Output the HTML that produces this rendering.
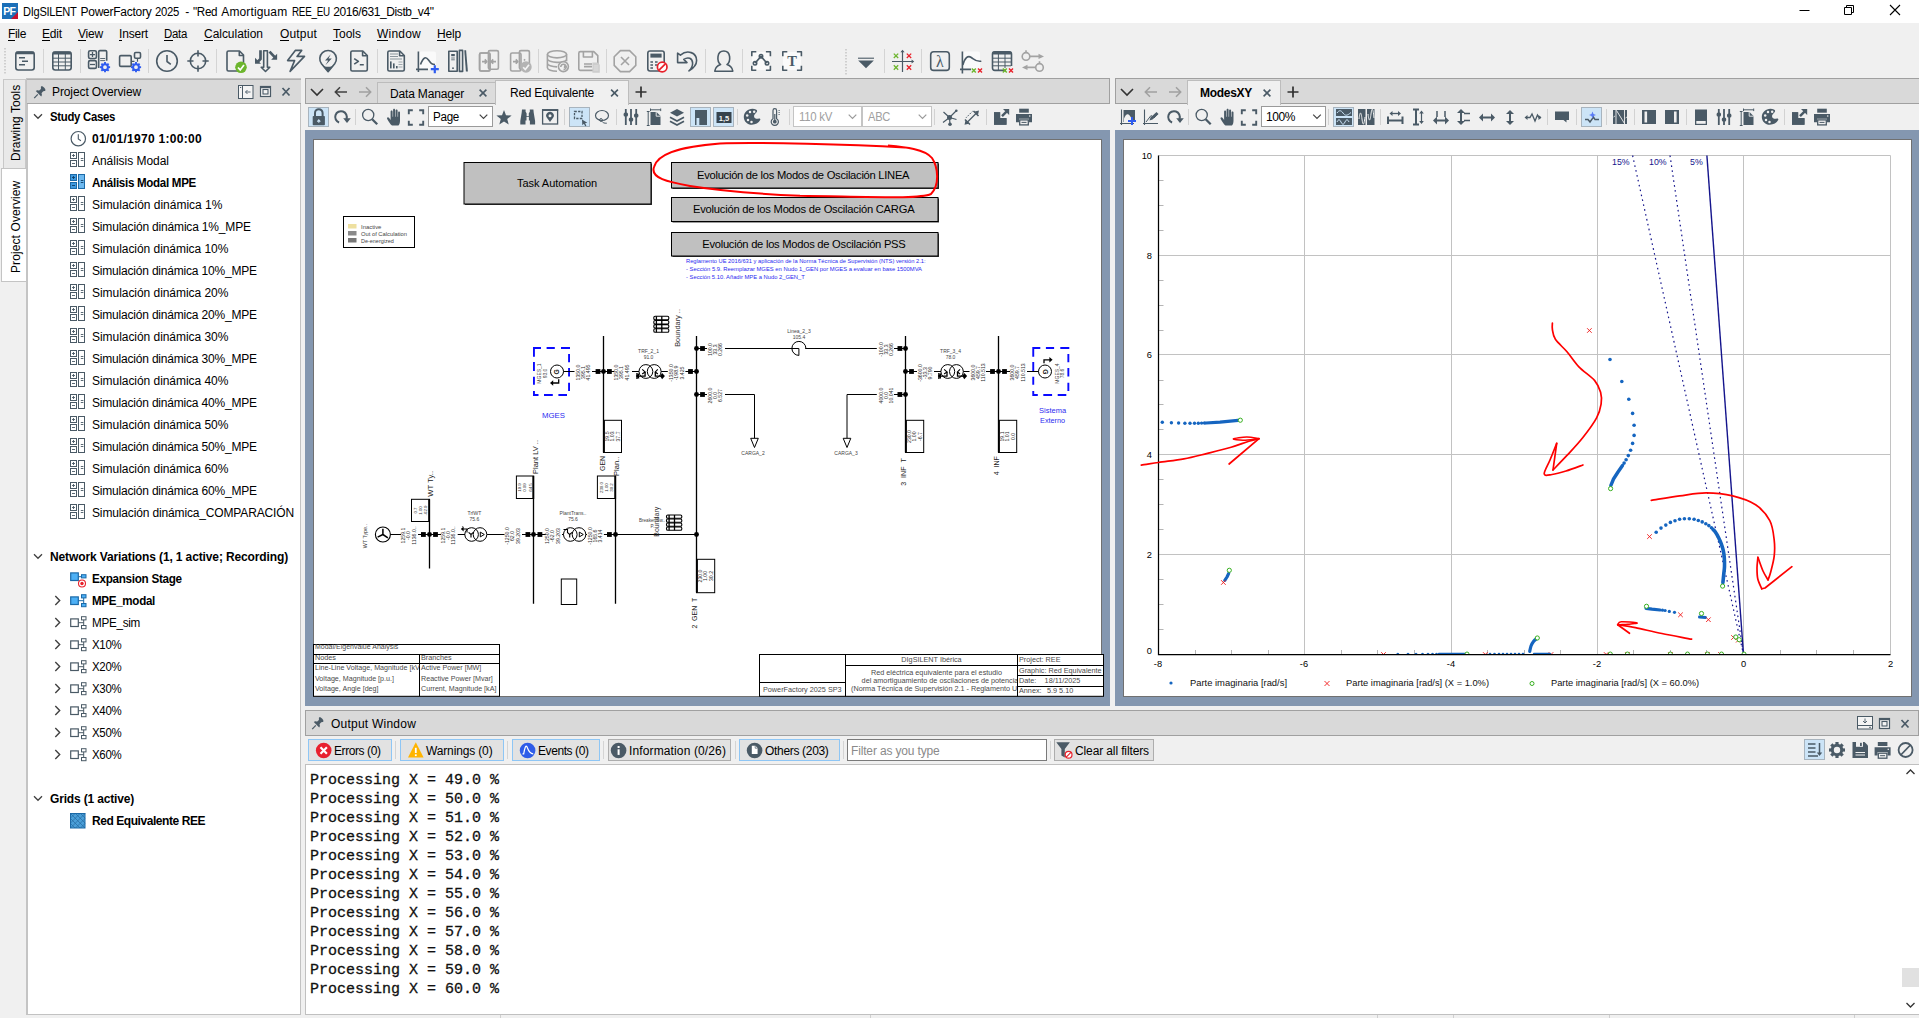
<!DOCTYPE html>
<html><head><meta charset="utf-8"><title>PowerFactory</title>
<style>

html,body{margin:0;padding:0;background:#f0f0f0;overflow:hidden;}
body{width:1919px;height:1018px;font-family:"Liberation Sans",sans-serif;font-size:12px;color:#000;}
#root{position:relative;width:1919px;height:1018px;overflow:hidden;background:#f0f0f0;}
.a{position:absolute;}
.t{position:absolute;white-space:nowrap;line-height:1;}
.b{font-weight:bold;}
svg{position:absolute;overflow:visible;}
.hdr{position:absolute;background:#d9d9d9;border:1px solid #a0a0a0;box-sizing:border-box;}
.canvas{position:absolute;background:#8497b0;}
.page{position:absolute;background:#fff;border:1px solid #555;box-sizing:border-box;}
.sep{position:absolute;width:1px;background:#c8c8c8;}
.hl{position:absolute;background:#cce4f7;border:1px solid #a8b4be;box-sizing:border-box;}
.combo{position:absolute;background:#fff;border:1px solid #9a9a9a;box-sizing:border-box;}
.mono{font-family:"Liberation Mono",monospace;}

</style></head>
<body>
<div id="root">
<div class="a" style="left:0px;top:0px;width:1919px;height:23px;background:#fff;"></div>
<svg style="left:2px;top:3px;" width="16" height="16"><rect x="0" y="0" width="16" height="16" fill="#1b6fb8"/><polygon points="16,9 16,16 9,16" fill="#c8102e"/><text x="1.2" y="11.6" font-family="Liberation Sans" font-weight="bold" font-size="10.5" fill="#fff" letter-spacing="-0.6">PF</text></svg>
<div class="t" style="left:23px;top:6px;font-size:12px;letter-spacing:-0.300px;transform:scaleX(0.9229);transform-origin:0 0;">DIgSILENT</div>
<div class="t" style="left:80.5px;top:6px;font-size:12px;letter-spacing:-0.251px;">PowerFactory</div>
<div class="t" style="left:155px;top:6px;font-size:12px;letter-spacing:-0.300px;transform:scaleX(0.9416);transform-origin:0 0;">2025</div>
<div class="t" style="left:185.3px;top:6px;font-size:12px;letter-spacing:0.000px;">-</div>
<div class="t" style="left:193px;top:6px;font-size:12px;letter-spacing:-0.300px;transform:scaleX(0.9689);transform-origin:0 0;">"Red</div>
<div class="t" style="left:221.3px;top:6px;font-size:12px;letter-spacing:0.131px;">Amortiguam</div>
<div class="t" style="left:292px;top:6px;font-size:12px;letter-spacing:-0.300px;transform:scaleX(0.8179);transform-origin:0 0;">REE_EU</div>
<div class="t" style="left:333.3px;top:6px;font-size:12px;letter-spacing:-0.414px;">2016/631_Distb_v4"</div>
<svg style="left:0px;top:0px;" width="1919" height="23"><path d="M1799.5 10.5h10" stroke="#000" stroke-width="1" fill="none"/><path d="M1844.5 7.5h7v7h-7z M1846.5 7.5v-2h7v7h-2" stroke="#000" stroke-width="1" fill="none"/><path d="M1890 5l10 10M1900 5l-10 10" stroke="#000" stroke-width="1.1" fill="none"/></svg>
<div class="t" style="left:8px;top:28px;font-size:12px;letter-spacing:-0.336px;">File</div>
<div class="a" style="left:8px;top:40px;width:7px;height:1px;background:#000;"></div>
<div class="t" style="left:42px;top:28px;font-size:12px;letter-spacing:-0.168px;">Edit</div>
<div class="a" style="left:42px;top:40px;width:8px;height:1px;background:#000;"></div>
<div class="t" style="left:78px;top:28px;font-size:12px;letter-spacing:-0.199px;">View</div>
<div class="a" style="left:78px;top:40px;width:8px;height:1px;background:#000;"></div>
<div class="t" style="left:119px;top:28px;font-size:12px;letter-spacing:-0.167px;">Insert</div>
<div class="a" style="left:119px;top:40px;width:3px;height:1px;background:#000;"></div>
<div class="t" style="left:164px;top:28px;font-size:12px;letter-spacing:-0.300px;transform:scaleX(0.9526);transform-origin:0 0;">Data</div>
<div class="a" style="left:164px;top:40px;width:9px;height:1px;background:#000;"></div>
<div class="t" style="left:204px;top:28px;font-size:12px;letter-spacing:-0.034px;">Calculation</div>
<div class="a" style="left:204px;top:40px;width:9px;height:1px;background:#000;"></div>
<div class="t" style="left:280px;top:28px;font-size:12px;letter-spacing:0.167px;">Output</div>
<div class="a" style="left:280px;top:40px;width:9px;height:1px;background:#000;"></div>
<div class="t" style="left:333px;top:28px;font-size:12px;letter-spacing:-0.003px;">Tools</div>
<div class="a" style="left:333px;top:40px;width:7px;height:1px;background:#000;"></div>
<div class="t" style="left:377px;top:28px;font-size:12px;letter-spacing:0.219px;">Window</div>
<div class="a" style="left:377px;top:40px;width:11px;height:1px;background:#000;"></div>
<div class="t" style="left:437px;top:28px;font-size:12px;letter-spacing:-0.172px;">Help</div>
<div class="a" style="left:437px;top:40px;width:9px;height:1px;background:#000;"></div>
<svg style="left:0px;top:46px;" width="1919" height="32" viewBox="0 46 1919 32"><rect x="4" y="48" width="2" height="1.5" fill="#cfcfcf"/><rect x="4" y="51" width="2" height="1.5" fill="#cfcfcf"/><rect x="4" y="54" width="2" height="1.5" fill="#cfcfcf"/><rect x="4" y="57" width="2" height="1.5" fill="#cfcfcf"/><rect x="4" y="60" width="2" height="1.5" fill="#cfcfcf"/><rect x="4" y="63" width="2" height="1.5" fill="#cfcfcf"/><rect x="4" y="66" width="2" height="1.5" fill="#cfcfcf"/><rect x="4" y="69" width="2" height="1.5" fill="#cfcfcf"/><rect x="4" y="72" width="2" height="1.5" fill="#cfcfcf"/><rect x="43" y="49" width="1" height="24" fill="#d4d4d4"/><rect x="80" y="49" width="1" height="24" fill="#d4d4d4"/><rect x="148" y="49" width="1" height="24" fill="#d4d4d4"/><rect x="216" y="49" width="1" height="24" fill="#d4d4d4"/><rect x="377" y="49" width="1" height="24" fill="#d4d4d4"/><rect x="538" y="49" width="1" height="24" fill="#d4d4d4"/><rect x="606" y="49" width="1" height="24" fill="#d4d4d4"/><rect x="705" y="49" width="1" height="24" fill="#d4d4d4"/><rect x="742" y="49" width="1" height="24" fill="#d4d4d4"/><rect x="884" y="49" width="1" height="24" fill="#d4d4d4"/><rect x="921" y="49" width="1" height="24" fill="#d4d4d4"/><rect x="845" y="49" width="2" height="1.5" fill="#cfcfcf"/><rect x="845" y="52" width="2" height="1.5" fill="#cfcfcf"/><rect x="845" y="55" width="2" height="1.5" fill="#cfcfcf"/><rect x="845" y="58" width="2" height="1.5" fill="#cfcfcf"/><rect x="845" y="61" width="2" height="1.5" fill="#cfcfcf"/><rect x="845" y="64" width="2" height="1.5" fill="#cfcfcf"/><rect x="845" y="67" width="2" height="1.5" fill="#cfcfcf"/><rect x="845" y="70" width="2" height="1.5" fill="#cfcfcf"/><rect x="845" y="73" width="2" height="1.5" fill="#cfcfcf"/><rect x="15.8" y="52" width="18.4" height="18" rx="2.5" stroke="#4a5a66" fill="none" stroke-width="1.6" stroke-linejoin="round" stroke-linecap="butt"/><rect x="15.8" y="51.6" width="18.4" height="2.6" rx="1" fill="#4a5a66"/><path d="M19 57.8h6M22 61.3h6M19 64.8h6" stroke="#4a5a66" fill="none" stroke-width="1.6" stroke-linejoin="round" stroke-linecap="butt" stroke-width="1.8"/><rect x="52.8" y="52" width="18.4" height="18" rx="2.5" stroke="#4a5a66" fill="none" stroke-width="1.6" stroke-linejoin="round" stroke-linecap="butt"/><rect x="52.8" y="51.6" width="18.4" height="3" rx="1" fill="#4a5a66"/><path d="M53 58.2h18M53 62h18M53 65.8h18M58.5 54v16M65.3 54v16" stroke="#4a5a66" stroke-width="1" fill="none"/><rect x="88.600" y="50.700" width="7.800" height="7.800" rx="1.500" stroke="#4a5a66" fill="none" stroke-width="1.6" stroke-linejoin="round" stroke-linecap="butt" stroke-width="1.200" fill="#f8f8f8"/><path d="M90 54.600h5M92.500 52.100v5" stroke="#4a5a66" stroke-width="1.300"/><rect x="88.600" y="60.600" width="7.800" height="7.800" rx="1.500" stroke="#4a5a66" fill="none" stroke-width="1.6" stroke-linejoin="round" stroke-linecap="butt" stroke-width="1.200" fill="#f8f8f8"/><path d="M90 64.500h5" stroke="#4a5a66" stroke-width="1.300"/><path d="M98.700 68v-16.200a1.200 1.200 0 0 1 1.200 -1.200h5.600a1.200 1.200 0 0 1 1.200 1.200v9" stroke="#4a5a66" fill="none" stroke-width="1.6" stroke-linejoin="round" stroke-linecap="butt" stroke-width="1.200" fill="#f8f8f8"/><path d="M100.200 58.500h5M100.200 60.600h5" stroke="#4a5a66" stroke-width="0.900"/><line x1="107.60" y1="67.20" x2="110.10" y2="67.20" stroke="#2f5cf0" stroke-width="1.9"/><line x1="106.84" y1="69.04" x2="108.61" y2="70.81" stroke="#2f5cf0" stroke-width="1.9"/><line x1="105.00" y1="69.80" x2="105.00" y2="72.30" stroke="#2f5cf0" stroke-width="1.9"/><line x1="103.16" y1="69.04" x2="101.39" y2="70.81" stroke="#2f5cf0" stroke-width="1.9"/><line x1="102.40" y1="67.20" x2="99.90" y2="67.20" stroke="#2f5cf0" stroke-width="1.9"/><line x1="103.16" y1="65.36" x2="101.39" y2="63.59" stroke="#2f5cf0" stroke-width="1.9"/><line x1="105.00" y1="64.60" x2="105.00" y2="62.10" stroke="#2f5cf0" stroke-width="1.9"/><line x1="106.84" y1="65.36" x2="108.61" y2="63.59" stroke="#2f5cf0" stroke-width="1.9"/><circle cx="105" cy="67.2" r="2.9000000000000004" fill="none" stroke="#2f5cf0" stroke-width="2"/><rect x="119.600" y="55.600" width="11.600" height="10.800" rx="1.200" stroke="#4a5a66" fill="none" stroke-width="1.6" stroke-linejoin="round" stroke-linecap="butt" stroke-width="1.300" fill="#f8f8f8"/><rect x="134.500" y="52.500" width="6" height="5.800" rx="1.200" stroke="#4a5a66" fill="none" stroke-width="1.6" stroke-linejoin="round" stroke-linecap="butt" stroke-width="1.200" fill="#f8f8f8"/><path d="M137.500 58.300v3.500M131.200 61.300h3.300" stroke="#4a5a66" stroke-width="1.200"/><line x1="138.60" y1="67.20" x2="141.10" y2="67.20" stroke="#2f5cf0" stroke-width="1.9"/><line x1="137.84" y1="69.04" x2="139.61" y2="70.81" stroke="#2f5cf0" stroke-width="1.9"/><line x1="136.00" y1="69.80" x2="136.00" y2="72.30" stroke="#2f5cf0" stroke-width="1.9"/><line x1="134.16" y1="69.04" x2="132.39" y2="70.81" stroke="#2f5cf0" stroke-width="1.9"/><line x1="133.40" y1="67.20" x2="130.90" y2="67.20" stroke="#2f5cf0" stroke-width="1.9"/><line x1="134.16" y1="65.36" x2="132.39" y2="63.59" stroke="#2f5cf0" stroke-width="1.9"/><line x1="136.00" y1="64.60" x2="136.00" y2="62.10" stroke="#2f5cf0" stroke-width="1.9"/><line x1="137.84" y1="65.36" x2="139.61" y2="63.59" stroke="#2f5cf0" stroke-width="1.9"/><circle cx="136" cy="67.2" r="2.9000000000000004" fill="none" stroke="#2f5cf0" stroke-width="2"/><circle cx="167" cy="61" r="10.300" stroke="#4a5a66" fill="none" stroke-width="1.6" stroke-linejoin="round" stroke-linecap="butt" stroke-width="1.200" fill="#fafafa"/><path d="M167 55v6.500l3.800 2.800" stroke="#4a5a66" fill="none" stroke-width="1.6" stroke-linejoin="round" stroke-linecap="butt" stroke-width="1.900"/><circle cx="198" cy="61" r="7.700" stroke="#4a5a66" fill="none" stroke-width="1.6" stroke-linejoin="round" stroke-linecap="butt" stroke-width="1.200" fill="#fafafa"/><path d="M198 50.300v6.200M198 65.500v6.200M187.300 61h6.200M202.500 61h6.200" stroke="#4a5a66" fill="none" stroke-width="1.6" stroke-linejoin="round" stroke-linecap="butt" stroke-width="2"/><path d="M227 52.5a1.5 1.5 0 0 1 1.5 -1.5h11l4 4v14.5a1.5 1.5 0 0 1 -1.5 1.5h-13.5a1.5 1.5 0 0 1 -1.5 -1.5z" stroke="#4a5a66" fill="none" stroke-width="1.6" stroke-linejoin="round" stroke-linecap="butt" stroke-width="1.4"/><path d="M239.3 51.3v4.2h4" stroke="#4a5a66" fill="none" stroke-width="1.6" stroke-linejoin="round" stroke-linecap="butt" stroke-width="1"/><circle cx="241" cy="67.3" r="5.8" fill="#6cb52d"/><path d="M238 67.5l2.2 2.4l3.8-5" stroke="#fff" stroke-width="1.7" fill="none"/><path d="M263.700 50.700h3.700v16.600h2.400l-4.300 4.200l-4.300-4.200h2.500z" stroke="#4a5a66" fill="none" stroke-width="1.6" stroke-linejoin="round" stroke-linecap="butt" stroke-width="1.100" fill="#f8f8f8" stroke-linejoin="miter"/><path d="M260.500 50.200v8.800l-3.200 3.200" stroke="#4a5a66" stroke-width="2.700" fill="none" stroke-linejoin="miter"/><path d="M255 57.800v6h6z" fill="#4a5a66"/><path d="M269.500 51.600l5.200 5.600" stroke="#4a5a66" stroke-width="2.700" fill="none"/><path d="M277.100 53.800v6h-6z" fill="#4a5a66"/><path d="M295.300 50.400h6.400l-4.700 6h7.500l-14.400 15l4.500-10.800h-7z" stroke="#4a5a66" fill="none" stroke-width="1.6" stroke-linejoin="round" stroke-linecap="butt" stroke-width="1.100" stroke-linejoin="miter" stroke-miterlimit="10" fill="#f8f8f8"/><path d="M328.100 71.700l-6.600-7.900a8.300 8.300 0 1 1 13.200 0z" stroke="#4a5a66" fill="none" stroke-width="1.6" stroke-linejoin="round" stroke-linecap="butt" stroke-width="1.500" fill="#fafafa"/><path d="M322.200 65.300c3.500 2 8.300 2 11.800 0l-5.900 6.700z" fill="#4a5a66"/><path d="M330.800 54.200l-5.800 6.200h3.200l-2.800 4.800l6.400-6.600h-3.300z" fill="#4a5a66"/><path d="M350.8 52.5a1.5 1.5 0 0 1 1.5 -1.5h10.5l4.5 4.5v14a1.5 1.5 0 0 1 -1.5 1.5h-13.5a1.5 1.5 0 0 1 -1.5 -1.5z" stroke="#4a5a66" fill="none" stroke-width="1.6" stroke-linejoin="round" stroke-linecap="butt" stroke-width="1.4"/><path d="M362.6 51.3v4.5h4.3" stroke="#4a5a66" fill="none" stroke-width="1.6" stroke-linejoin="round" stroke-linecap="butt" stroke-width="1"/><path d="M354.2 58.6l4.2 2.8l-4.2 2.8M359.8 64.8h4" stroke="#4a5a66" fill="none" stroke-width="1.6" stroke-linejoin="round" stroke-linecap="butt" stroke-width="1.4"/><path d="M387.8 52.5a1.5 1.5 0 0 1 1.5 -1.5h10.5l4.5 4.5v14a1.5 1.5 0 0 1 -1.5 1.5h-13.5a1.5 1.5 0 0 1 -1.5 -1.5z" stroke="#4a5a66" fill="none" stroke-width="1.6" stroke-linejoin="round" stroke-linecap="butt" stroke-width="1.4"/><path d="M399.6 51.3v4.5h4.3" stroke="#4a5a66" fill="none" stroke-width="1.6" stroke-linejoin="round" stroke-linecap="butt" stroke-width="1"/><path d="M390 54h8M390 56.5h8M390 59h12" stroke="#4a5a66" stroke-width="0.8" opacity="0.75"/><path d="M398.5 62h4M398.5 64.5h4M398.5 67h4" stroke="#4a5a66" stroke-width="0.8" opacity="0.6"/><rect x="390" y="61.4" width="1.6" height="7" fill="#4a5a66"/><rect x="393" y="63.4" width="1.6" height="5" fill="#4a5a66"/><rect x="396" y="66" width="1.6" height="2.4" fill="#4a5a66"/><rect x="419" y="51.5" width="17" height="18" rx="2" fill="#fafafa"/><path d="M418.4 51.5v20.5M416 69.4h12" stroke="#4a5a66" fill="none" stroke-width="1.6" stroke-linejoin="round" stroke-linecap="butt" stroke-width="1.2"/><path d="M420.5 64.5c3-8 5.5-8 8-4.5s3.5 4.5 6.5 4.5" stroke="#4a5a66" fill="none" stroke-width="1.6" stroke-linejoin="round" stroke-linecap="butt" stroke-width="1.1"/><path d="M430.8 69.2h8M434.8 65.2v8" stroke="#2f5cf0" stroke-width="2.2"/><rect x="448.8" y="51.2" width="8.4" height="20" stroke="#4a5a66" fill="none" stroke-width="1.6" stroke-linejoin="round" stroke-linecap="butt" stroke-width="1.6"/><rect x="451.2" y="54" width="3.6" height="2.2" fill="#4a5a66"/><path d="M451.2 58h3.6M451.2 59.8h3.6" stroke="#4a5a66" stroke-width="0.8"/><rect x="452.2" y="67.4" width="1.6" height="1.6" fill="#4a5a66"/><rect x="459.4" y="50.4" width="3.2" height="21" stroke="#4a5a66" fill="none" stroke-width="1.6" stroke-linejoin="round" stroke-linecap="butt" stroke-width="1.3"/><path d="M464.3 50.2h1.8l1.8 21.4h-2z" fill="#4a5a66"/><rect x="479.6" y="53" width="10.4" height="18" rx="1.5" stroke="#a3a3a3" fill="none" stroke-width="1.6" stroke-linejoin="round" stroke-width="1.2" fill="#f4f4f4"/><rect x="488.4" y="50.6" width="10" height="18.6" rx="1.5" stroke="#a3a3a3" fill="none" stroke-width="1.6" stroke-linejoin="round" stroke-width="1.2" fill="#f4f4f4"/><rect x="479.6" y="53" width="10.4" height="18" rx="1.5" stroke="#a3a3a3" fill="none" stroke-width="1.6" stroke-linejoin="round" stroke-width="1.2" fill="#f4f4f4"/><path d="M482 61.6h4.4M484.8 59.4l2 2.2l-2 2.2M496 61.6h-4.4M493.2 59.4l-2 2.2l2 2.2" stroke="#a3a3a3" fill="none" stroke-width="1.6" stroke-linejoin="round" stroke-width="1.1"/><rect x="519.4" y="50.6" width="10" height="18.6" rx="1.5" stroke="#a3a3a3" fill="none" stroke-width="1.6" stroke-linejoin="round" stroke-width="1.2" fill="#f4f4f4"/><rect x="510.6" y="53" width="10.4" height="18" rx="1.5" stroke="#a3a3a3" fill="none" stroke-width="1.6" stroke-linejoin="round" stroke-width="1.2" fill="#f4f4f4"/><path d="M513 61.6h4.4M515.8 59.4l2 2.2l-2 2.2" stroke="#a3a3a3" fill="none" stroke-width="1.6" stroke-linejoin="round" stroke-width="1.1"/><path d="M524 60.5l1-1.2" stroke="#a3a3a3" fill="none" stroke-width="1.6" stroke-linejoin="round" stroke-width="1"/><circle cx="526" cy="67" r="5.7" fill="#b4b4b4"/><path d="M523.2 67.2l2.1 2.3l3.7-4.8" stroke="#f4f4f4" stroke-width="1.7" fill="none"/><ellipse cx="557" cy="54.3" rx="9.6" ry="3.6" stroke="#a3a3a3" fill="none" stroke-width="1.6" stroke-linejoin="round" stroke-width="1.3"/><path d="M547.4 54.3v13.4c0 2 4.3 3.6 9.6 3.6M566.6 54.3v7M547.4 58.8c0 2 4.3 3.6 9.6 3.6s9-1.3 9.6-3M547.4 63.3c0 2 4.3 3.6 9.6 3.6" stroke="#a3a3a3" fill="none" stroke-width="1.6" stroke-linejoin="round" stroke-width="1.3"/><circle cx="563.4" cy="66.6" r="5" fill="#f0f0f0" stroke="#a3a3a3" fill="none" stroke-width="1.6" stroke-linejoin="round" stroke-width="1.5"/><path d="M560.8 67a2.7 2.7 0 1 1 2.7 2.6" stroke="#a3a3a3" fill="none" stroke-width="1.6" stroke-linejoin="round" stroke-width="1.4"/><path d="M564 64.8l3 2.2l-3.2 1.4z" fill="#a3a3a3"/><path d="M578.8 53.2a1.6 1.6 0 0 1 1.6 -1.6h13.4l4 4v13.2a1.6 1.6 0 0 1 -1.6 1.6h-15.8a1.6 1.6 0 0 1 -1.6 -1.6z" stroke="#a3a3a3" fill="none" stroke-width="1.6" stroke-linejoin="round" stroke-width="1.3"/><path d="M583.4 51.8v5.2h9v-5.2" stroke="#a3a3a3" fill="none" stroke-width="1.6" stroke-linejoin="round" stroke-width="1.2"/><path d="M584 64h8M584 66.6h8" stroke="#a3a3a3" fill="none" stroke-width="1.6" stroke-linejoin="round" stroke-width="1"/><path d="M592.4 62.4h5l2.4 2.4v8h-7.4z" fill="#cdcdcd"/><path d="M593.6 66h4.8M593.6 68h4.8M593.6 70h4.8" stroke="#e4e4e4" stroke-width="0.8"/><path d="M620.4 50.6h9.2l6.2 6.2v8.6l-6.2 6.2h-9.2l-6.2-6.2v-8.6z" stroke="#a3a3a3" fill="none" stroke-width="1.6" stroke-linejoin="round" stroke-width="1.3" fill="#f6f6f6"/><path d="M621 57l8 8M629 57l-8 8" stroke="#a3a3a3" fill="none" stroke-width="1.6" stroke-linejoin="round" stroke-width="1.8"/><rect x="647.8" y="51" width="16.4" height="20" rx="2.2" stroke="#4a5a66" fill="none" stroke-width="1.6" stroke-linejoin="round" stroke-linecap="butt" stroke-width="1.6"/><rect x="650.4" y="53.6" width="11.2" height="4" fill="#4a5a66"/><path d="M650.4 62h2.6M655 62h2.6M650.4 65h2.6M655 65h2.6M650.4 68h2.6" stroke="#4a5a66" stroke-width="1.7"/><circle cx="662.2" cy="67" r="4.8" fill="#fff" stroke="#e8202a" stroke-width="1.7"/><path d="M659 70.2l6.4-6.4" stroke="#e8202a" stroke-width="1.7"/><path d="M677.6 53.2v9.4h9.4l-3.2-3.2c4.5-3 8.5-1 8.8 3.5c0.2 3.5-1.5 6-3.6 8c4-2.5 7.6-6 7.6-10.5c0-7.5-9-11.500-16.2-5.200z" stroke="#4a5a66" fill="none" stroke-width="1.6" stroke-linejoin="round" stroke-linecap="butt" stroke-width="1.3"/><path d="M714.8 71.200c0.6-4 2.500-5.600 5.800-6.600c-2.400-2-3-5-2.600-8c0.400-3.200 2.600-5.600 5.800-5.600s5.400 2.400 5.800 5.600c0.400 3-0.200 6-2.600 8c3.300 1 5.200 2.600 5.800 6.600z" stroke="#4a5a66" fill="none" stroke-width="1.6" stroke-linejoin="round" stroke-linecap="butt" stroke-width="1.5"/><rect x="752" y="52" width="18" height="18" fill="#fafafa"/><path d="M751.8 56.3v-4.5h4.5M765.9 51.8h4.5v4.5M770.4 65.7v4.5h-4.5M756.3 70.2h-4.5v-4.5" stroke="#4a5a66" fill="none" stroke-width="1.6" stroke-linejoin="round" stroke-linecap="butt" stroke-width="1.5" stroke-linejoin="miter"/><path d="M755.200 63l5.800-6.600l5.800 6.600" stroke="#4a5a66" fill="none" stroke-width="1.6" stroke-linejoin="round" stroke-linecap="butt" stroke-width="1.1"/><circle cx="755" cy="63.300" r="1.700" stroke="#4a5a66" fill="none" stroke-width="1.6" stroke-linejoin="round" stroke-linecap="butt" stroke-width="1.1" fill="#fafafa"/><circle cx="761" cy="56.200" r="1.700" stroke="#4a5a66" fill="none" stroke-width="1.6" stroke-linejoin="round" stroke-linecap="butt" stroke-width="1.1" fill="#fafafa"/><circle cx="767" cy="63.300" r="1.700" stroke="#4a5a66" fill="none" stroke-width="1.6" stroke-linejoin="round" stroke-linecap="butt" stroke-width="1.1" fill="#fafafa"/><rect x="783" y="52" width="18" height="18" fill="#fafafa"/><path d="M782.8 56.3v-4.5h4.5M796.9 51.8h4.5v4.5M801.4 65.7v4.5h-4.5M787.3 70.2h-4.5v-4.5" stroke="#4a5a66" fill="none" stroke-width="1.6" stroke-linejoin="round" stroke-linecap="butt" stroke-width="1.5" stroke-linejoin="miter"/><text x="792.1" y="66" text-anchor="middle" font-family="Liberation Serif" font-weight="bold" font-size="14.500" fill="#4a5a66">T</text><path d="M858 58.200h16" stroke="#4a5a66" stroke-width="1.1"/><path d="M858.200 60.600h15.600l-7.800 7.600z" fill="#4a5a66"/><path d="M902.500 72v-21M892 61.500h20.500" stroke="#4a5a66" stroke-width="1.200" fill="none"/><path d="M900.400 52.300l2.100-2.600l2.100 2.600zM911.600 59.400l2.600 2.100l-2.600 2.100z" fill="#4a5a66"/><path d="M893.8 53.599999999999994l4.4 4.4M898.2 53.599999999999994l-4.4 4.4" stroke="#6cb52d" stroke-width="1.3" fill="none"/><path d="M906.8 53.599999999999994l4.4 4.4M911.2 53.599999999999994l-4.4 4.4" stroke="#e8202a" stroke-width="1.3" fill="none"/><path d="M893.8 65.3l4.4 4.4M898.2 65.3l-4.4 4.4" stroke="#6cb52d" stroke-width="1.3" fill="none"/><path d="M906.8 65.3l4.4 4.4M911.2 65.3l-4.4 4.4" stroke="#e8202a" stroke-width="1.3" fill="none"/><rect x="930.700" y="51.800" width="18.600" height="18.600" rx="3" stroke="#4a5a66" fill="none" stroke-width="1.6" stroke-linejoin="round" stroke-linecap="butt" stroke-width="1.500" fill="#fafafa"/><text x="940" y="67" text-anchor="middle" font-family="Liberation Serif" font-size="16" fill="#4a5a66">λ</text><rect x="963" y="51.500" width="17" height="18" rx="2" fill="#fafafa"/><path d="M962.400 51.500v22M960 69.400h11" stroke="#4a5a66" fill="none" stroke-width="1.6" stroke-linejoin="round" stroke-linecap="butt" stroke-width="1.200"/><path d="M962.800 65c2-7 5-10 8.500-7.500s5 4.500 10 3.700" stroke="#4a5a66" fill="none" stroke-width="1.6" stroke-linejoin="round" stroke-linecap="butt" stroke-width="1.100"/><path d="M971.8 68.6l4 4M975.8 68.6l-4 4" stroke="#6cb52d" stroke-width="1.4" fill="none"/><path d="M978 68.6l4 4M982 68.6l-4 4" stroke="#e8202a" stroke-width="1.4" fill="none"/><path d="M1006 70.400h-11.200a2.300 2.300 0 0 1 -2.300 -2.300v-14a2.300 2.300 0 0 1 2.300 -2.300h14.400a2.300 2.300 0 0 1 2.300 2.300v12" stroke="#4a5a66" fill="none" stroke-width="1.6" stroke-linejoin="round" stroke-linecap="butt" stroke-width="1.500"/><rect x="992.600" y="51.600" width="18.800" height="3" rx="1" fill="#4a5a66"/><path d="M993 58.200h18M993 62h18M993 65.800h18M998.400 54v16M1005 54v14" stroke="#4a5a66" stroke-width="1" fill="none"/><path d="M1002.8 68.6l4 4M1006.8 68.6l-4 4" stroke="#6cb52d" stroke-width="1.4" fill="none"/><path d="M1009 68.6l4 4M1013 68.6l-4 4" stroke="#e8202a" stroke-width="1.4" fill="none"/><circle cx="1026" cy="56.400" r="3.800" stroke="#a3a3a3" fill="none" stroke-width="1.6" stroke-linejoin="round" stroke-width="1.100" fill="#fafafa"/><path d="M1026 50.200v2.400M1030 56.400h9" stroke="#a3a3a3" fill="none" stroke-width="1.6" stroke-linejoin="round" stroke-width="1.100"/><path d="M1038.500 53.800l5.500 2.600l-5.500 2.600z" fill="#a3a3a3"/><circle cx="1039.500" cy="67.400" r="3.800" stroke="#a3a3a3" fill="none" stroke-width="1.6" stroke-linejoin="round" stroke-width="1.100" fill="#fafafa"/><path d="M1039.500 61.200v2.400M1035.500 67.400h-9" stroke="#a3a3a3" fill="none" stroke-width="1.6" stroke-linejoin="round" stroke-width="1.100"/><path d="M1027.500 64.800l-5.500 2.600l5.500 2.600z" fill="#a3a3a3"/></svg>
<div class="a" style="left:3px;top:79px;width:23px;height:90px;background:#e9e9e9;border:1px solid #c8c8c8;box-sizing:border-box;"></div>
<div class="a" style="left:1px;top:168px;width:26px;height:114px;background:#fff;border:1px solid #c4c4c4;box-sizing:border-box;border-right:none;"></div>
<div class="t" style="left:10px;top:161px;font-size:12px;transform:rotate(-90deg);transform-origin:0 0;letter-spacing:0.1px;">Drawing Tools</div>
<div class="t" style="left:10px;top:273px;font-size:12px;transform:rotate(-90deg);transform-origin:0 0;letter-spacing:0.1px;">Project Overview</div>
<div class="a" style="left:26px;top:78px;width:275px;height:937px;background:#fff;border:1px solid #c2c2c2;box-sizing:border-box;border-left:2px solid #c4c4c4;"></div>
<div class="a" style="left:27px;top:79px;width:274px;height:25px;background:#d9d9d9;border-bottom:1px solid #a6a6a6;border-top:1px solid #b0b0b0;box-sizing:border-box;"></div>
<div class="t" style="left:52px;top:86px;font-size:12px;letter-spacing:-0.105px;">Project Overview</div>
<div class="t b" style="left:50px;top:111px;font-size:12px;letter-spacing:-0.300px;transform:scaleX(0.9459);transform-origin:0 0;">Study Cases</div>
<div class="t b" style="left:92px;top:133px;font-size:12px;letter-spacing:0.293px;">01/01/1970 1:00:00</div>
<div class="t" style="left:92px;top:155px;font-size:12px;letter-spacing:-0.027px;">Análisis Modal</div>
<div class="t b" style="left:92px;top:177px;font-size:12px;letter-spacing:-0.300px;transform:scaleX(0.9637);transform-origin:0 0;">Análisis Modal MPE</div>
<div class="t" style="left:92px;top:199px;font-size:12px;letter-spacing:-0.020px;">Simulación dinámica 1%</div>
<div class="t" style="left:92px;top:221px;font-size:12px;letter-spacing:-0.177px;">Simulación dinámica 1%_MPE</div>
<div class="t" style="left:92px;top:243px;font-size:12px;letter-spacing:-0.048px;">Simulación dinámica 10%</div>
<div class="t" style="left:92px;top:265px;font-size:12px;letter-spacing:-0.195px;">Simulación dinámica 10%_MPE</div>
<div class="t" style="left:92px;top:287px;font-size:12px;letter-spacing:-0.048px;">Simulación dinámica 20%</div>
<div class="t" style="left:92px;top:309px;font-size:12px;letter-spacing:-0.195px;">Simulación dinámica 20%_MPE</div>
<div class="t" style="left:92px;top:331px;font-size:12px;letter-spacing:-0.048px;">Simulación dinámica 30%</div>
<div class="t" style="left:92px;top:353px;font-size:12px;letter-spacing:-0.195px;">Simulación dinámica 30%_MPE</div>
<div class="t" style="left:92px;top:375px;font-size:12px;letter-spacing:-0.048px;">Simulación dinámica 40%</div>
<div class="t" style="left:92px;top:397px;font-size:12px;letter-spacing:-0.195px;">Simulación dinámica 40%_MPE</div>
<div class="t" style="left:92px;top:419px;font-size:12px;letter-spacing:-0.048px;">Simulación dinámica 50%</div>
<div class="t" style="left:92px;top:441px;font-size:12px;letter-spacing:-0.195px;">Simulación dinámica 50%_MPE</div>
<div class="t" style="left:92px;top:463px;font-size:12px;letter-spacing:-0.048px;">Simulación dinámica 60%</div>
<div class="t" style="left:92px;top:485px;font-size:12px;letter-spacing:-0.195px;">Simulación dinámica 60%_MPE</div>
<div class="t" style="left:92px;top:507px;font-size:12px;letter-spacing:-0.146px;">Simulación dinámica_COMPARACIÓN</div>
<div class="t b" style="left:50px;top:551px;font-size:12px;letter-spacing:-0.124px;">Network Variations (1, 1 active; Recording)</div>
<div class="t b" style="left:92px;top:573px;font-size:12px;letter-spacing:-0.300px;transform:scaleX(0.9733);transform-origin:0 0;">Expansion Stage</div>
<div class="t b" style="left:92px;top:595px;font-size:12px;letter-spacing:-0.300px;transform:scaleX(0.9648);transform-origin:0 0;">MPE_modal</div>
<div class="t" style="left:92px;top:617px;font-size:12px;letter-spacing:-0.300px;transform:scaleX(0.9747);transform-origin:0 0;">MPE_sim</div>
<div class="t" style="left:92px;top:639px;font-size:12px;letter-spacing:-0.300px;transform:scaleX(0.9541);transform-origin:0 0;">X10%</div>
<div class="t" style="left:92px;top:661px;font-size:12px;letter-spacing:-0.300px;transform:scaleX(0.9541);transform-origin:0 0;">X20%</div>
<div class="t" style="left:92px;top:683px;font-size:12px;letter-spacing:-0.300px;transform:scaleX(0.9541);transform-origin:0 0;">X30%</div>
<div class="t" style="left:92px;top:705px;font-size:12px;letter-spacing:-0.300px;transform:scaleX(0.9541);transform-origin:0 0;">X40%</div>
<div class="t" style="left:92px;top:727px;font-size:12px;letter-spacing:-0.300px;transform:scaleX(0.9541);transform-origin:0 0;">X50%</div>
<div class="t" style="left:92px;top:749px;font-size:12px;letter-spacing:-0.300px;transform:scaleX(0.9541);transform-origin:0 0;">X60%</div>
<div class="t b" style="left:50px;top:793px;font-size:12px;letter-spacing:-0.167px;">Grids (1 active)</div>
<div class="t b" style="left:92px;top:815px;font-size:12px;letter-spacing:-0.438px;">Red Equivalente REE</div>
<svg style="left:0px;top:0px;" width="305" height="1018" viewBox="0 0 305 1018"><g transform="translate(34,86)"><path d="M7.200 0.300c1.600-0.700 4.600 2.300 4.200 4.100c-0.500 0.700-1.600 0.500-2.200 0.900l-1.700 2c0.600 1.100 0.500 2.200-0.300 3.100l-5.400-5.400c0.900-0.800 2-0.900 3.100-0.300l2-1.700c0.200-0.900-0.300-2 0.300-2.700z" fill="#4a5a66"/><path d="M3.800 8.300l-3.600 3.900" stroke="#4a5a66" stroke-width="1.200"/></g><rect x="238.500" y="85.500" width="14.500" height="13" fill="#f4f4f4" stroke="#4a5a66" stroke-width="1"/><path d="M242.500 85.500v13M240 87.500h1.200" stroke="#4a5a66" stroke-width="1"/><path d="M245.500 92h5M245.500 92l2-2M245.500 92l2 2" stroke="#4a5a66" stroke-width="0.9" fill="none"/><rect x="260.500" y="86.500" width="10" height="10" fill="#f4f4f4" stroke="#4a5a66" stroke-width="1.200"/><rect x="263" y="89.500" width="5" height="4.500" fill="none" stroke="#4a5a66" stroke-width="1.100"/><path d="M260.500 87.500h10" stroke="#4a5a66" stroke-width="1.400"/><path d="M282.500 88l7 7.500M289.500 88l-7 7.500" stroke="#4a5a66" stroke-width="1.700" fill="none"/><path d="M34 114.3l4 4l4-4" stroke="#404040" stroke-width="1.300" fill="none"/><circle cx="78.300" cy="138.7" r="7.200" stroke="#4a5a66" fill="none" stroke-width="1.200"/><path d="M78.300 134.2v4.800l2.600 1.700" stroke="#4a5a66" fill="none" stroke-width="1.100"/><rect x="70.5" y="152.5" width="6" height="6" fill="none" stroke="#4a5a66" stroke-width="1"/><rect x="70.5" y="160.5" width="6" height="6" fill="none" stroke="#4a5a66" stroke-width="1"/><rect x="78.5" y="152.5" width="6" height="14" fill="none" stroke="#4a5a66" stroke-width="1"/><path d="M72 155.5h3M73.5 154.0v3M72 163.5h3M80.8 158.5h2.600M80.8 160.5h2.600" stroke="#4a5a66" stroke-width="0.9" fill="none"/><rect x="70.5" y="174.5" width="6" height="6" fill="#3f9ae0" stroke="#1b6aa8" stroke-width="1"/><rect x="70.5" y="182.5" width="6" height="6" fill="#3f9ae0" stroke="#1b6aa8" stroke-width="1"/><rect x="78.5" y="174.5" width="6" height="14" fill="#6db9f0" stroke="#1b6aa8" stroke-width="1"/><path d="M72 177.5h3M73.5 176.0v3M72 185.5h3M80.8 180.5h2.600M80.8 182.5h2.600" stroke="#0d3e66" stroke-width="0.9" fill="none"/><rect x="70.5" y="196.5" width="6" height="6" fill="none" stroke="#4a5a66" stroke-width="1"/><rect x="70.5" y="204.5" width="6" height="6" fill="none" stroke="#4a5a66" stroke-width="1"/><rect x="78.5" y="196.5" width="6" height="14" fill="none" stroke="#4a5a66" stroke-width="1"/><path d="M72 199.5h3M73.5 198.0v3M72 207.5h3M80.8 202.5h2.600M80.8 204.5h2.600" stroke="#4a5a66" stroke-width="0.9" fill="none"/><rect x="70.5" y="218.5" width="6" height="6" fill="none" stroke="#4a5a66" stroke-width="1"/><rect x="70.5" y="226.5" width="6" height="6" fill="none" stroke="#4a5a66" stroke-width="1"/><rect x="78.5" y="218.5" width="6" height="14" fill="none" stroke="#4a5a66" stroke-width="1"/><path d="M72 221.5h3M73.5 220.0v3M72 229.5h3M80.8 224.5h2.600M80.8 226.5h2.600" stroke="#4a5a66" stroke-width="0.9" fill="none"/><rect x="70.5" y="240.5" width="6" height="6" fill="none" stroke="#4a5a66" stroke-width="1"/><rect x="70.5" y="248.5" width="6" height="6" fill="none" stroke="#4a5a66" stroke-width="1"/><rect x="78.5" y="240.5" width="6" height="14" fill="none" stroke="#4a5a66" stroke-width="1"/><path d="M72 243.5h3M73.5 242.0v3M72 251.5h3M80.8 246.5h2.600M80.8 248.5h2.600" stroke="#4a5a66" stroke-width="0.9" fill="none"/><rect x="70.5" y="262.5" width="6" height="6" fill="none" stroke="#4a5a66" stroke-width="1"/><rect x="70.5" y="270.5" width="6" height="6" fill="none" stroke="#4a5a66" stroke-width="1"/><rect x="78.5" y="262.5" width="6" height="14" fill="none" stroke="#4a5a66" stroke-width="1"/><path d="M72 265.5h3M73.5 264.0v3M72 273.5h3M80.8 268.5h2.600M80.8 270.5h2.600" stroke="#4a5a66" stroke-width="0.9" fill="none"/><rect x="70.5" y="284.5" width="6" height="6" fill="none" stroke="#4a5a66" stroke-width="1"/><rect x="70.5" y="292.5" width="6" height="6" fill="none" stroke="#4a5a66" stroke-width="1"/><rect x="78.5" y="284.5" width="6" height="14" fill="none" stroke="#4a5a66" stroke-width="1"/><path d="M72 287.5h3M73.5 286.0v3M72 295.5h3M80.8 290.5h2.600M80.8 292.5h2.600" stroke="#4a5a66" stroke-width="0.9" fill="none"/><rect x="70.5" y="306.5" width="6" height="6" fill="none" stroke="#4a5a66" stroke-width="1"/><rect x="70.5" y="314.5" width="6" height="6" fill="none" stroke="#4a5a66" stroke-width="1"/><rect x="78.5" y="306.5" width="6" height="14" fill="none" stroke="#4a5a66" stroke-width="1"/><path d="M72 309.5h3M73.5 308.0v3M72 317.5h3M80.8 312.5h2.600M80.8 314.5h2.600" stroke="#4a5a66" stroke-width="0.9" fill="none"/><rect x="70.5" y="328.5" width="6" height="6" fill="none" stroke="#4a5a66" stroke-width="1"/><rect x="70.5" y="336.5" width="6" height="6" fill="none" stroke="#4a5a66" stroke-width="1"/><rect x="78.5" y="328.5" width="6" height="14" fill="none" stroke="#4a5a66" stroke-width="1"/><path d="M72 331.5h3M73.5 330.0v3M72 339.5h3M80.8 334.5h2.600M80.8 336.5h2.600" stroke="#4a5a66" stroke-width="0.9" fill="none"/><rect x="70.5" y="350.5" width="6" height="6" fill="none" stroke="#4a5a66" stroke-width="1"/><rect x="70.5" y="358.5" width="6" height="6" fill="none" stroke="#4a5a66" stroke-width="1"/><rect x="78.5" y="350.5" width="6" height="14" fill="none" stroke="#4a5a66" stroke-width="1"/><path d="M72 353.5h3M73.5 352.0v3M72 361.5h3M80.8 356.5h2.600M80.8 358.5h2.600" stroke="#4a5a66" stroke-width="0.9" fill="none"/><rect x="70.5" y="372.5" width="6" height="6" fill="none" stroke="#4a5a66" stroke-width="1"/><rect x="70.5" y="380.5" width="6" height="6" fill="none" stroke="#4a5a66" stroke-width="1"/><rect x="78.5" y="372.5" width="6" height="14" fill="none" stroke="#4a5a66" stroke-width="1"/><path d="M72 375.5h3M73.5 374.0v3M72 383.5h3M80.8 378.5h2.600M80.8 380.5h2.600" stroke="#4a5a66" stroke-width="0.9" fill="none"/><rect x="70.5" y="394.5" width="6" height="6" fill="none" stroke="#4a5a66" stroke-width="1"/><rect x="70.5" y="402.5" width="6" height="6" fill="none" stroke="#4a5a66" stroke-width="1"/><rect x="78.5" y="394.5" width="6" height="14" fill="none" stroke="#4a5a66" stroke-width="1"/><path d="M72 397.5h3M73.5 396.0v3M72 405.5h3M80.8 400.5h2.600M80.8 402.5h2.600" stroke="#4a5a66" stroke-width="0.9" fill="none"/><rect x="70.5" y="416.5" width="6" height="6" fill="none" stroke="#4a5a66" stroke-width="1"/><rect x="70.5" y="424.5" width="6" height="6" fill="none" stroke="#4a5a66" stroke-width="1"/><rect x="78.5" y="416.5" width="6" height="14" fill="none" stroke="#4a5a66" stroke-width="1"/><path d="M72 419.5h3M73.5 418.0v3M72 427.5h3M80.8 422.5h2.600M80.8 424.5h2.600" stroke="#4a5a66" stroke-width="0.9" fill="none"/><rect x="70.5" y="438.5" width="6" height="6" fill="none" stroke="#4a5a66" stroke-width="1"/><rect x="70.5" y="446.5" width="6" height="6" fill="none" stroke="#4a5a66" stroke-width="1"/><rect x="78.5" y="438.5" width="6" height="14" fill="none" stroke="#4a5a66" stroke-width="1"/><path d="M72 441.5h3M73.5 440.0v3M72 449.5h3M80.8 444.5h2.600M80.8 446.5h2.600" stroke="#4a5a66" stroke-width="0.9" fill="none"/><rect x="70.5" y="460.5" width="6" height="6" fill="none" stroke="#4a5a66" stroke-width="1"/><rect x="70.5" y="468.5" width="6" height="6" fill="none" stroke="#4a5a66" stroke-width="1"/><rect x="78.5" y="460.5" width="6" height="14" fill="none" stroke="#4a5a66" stroke-width="1"/><path d="M72 463.5h3M73.5 462.0v3M72 471.5h3M80.8 466.5h2.600M80.8 468.5h2.600" stroke="#4a5a66" stroke-width="0.9" fill="none"/><rect x="70.5" y="482.5" width="6" height="6" fill="none" stroke="#4a5a66" stroke-width="1"/><rect x="70.5" y="490.5" width="6" height="6" fill="none" stroke="#4a5a66" stroke-width="1"/><rect x="78.5" y="482.5" width="6" height="14" fill="none" stroke="#4a5a66" stroke-width="1"/><path d="M72 485.5h3M73.5 484.0v3M72 493.5h3M80.8 488.5h2.600M80.8 490.5h2.600" stroke="#4a5a66" stroke-width="0.9" fill="none"/><rect x="70.5" y="504.5" width="6" height="6" fill="none" stroke="#4a5a66" stroke-width="1"/><rect x="70.5" y="512.5" width="6" height="6" fill="none" stroke="#4a5a66" stroke-width="1"/><rect x="78.5" y="504.5" width="6" height="14" fill="none" stroke="#4a5a66" stroke-width="1"/><path d="M72 507.5h3M73.5 506.0v3M72 515.5h3M80.8 510.5h2.600M80.8 512.5h2.600" stroke="#4a5a66" stroke-width="0.9" fill="none"/><path d="M34 554.3l4 4l4-4" stroke="#404040" stroke-width="1.300" fill="none"/><rect x="70.700" y="572.9000000000001" width="7.600" height="7.600" fill="#4db0f5" stroke="#1b6aa8" stroke-width="1.200"/><rect x="81.500" y="574.7" width="4.500" height="3.200" fill="#4db0f5" stroke="#1b6aa8" stroke-width="1"/><path d="M78.300 576.7h3.200" stroke="#1b6aa8" stroke-width="1"/><circle cx="82" cy="583.5" r="3.500" fill="#fff" stroke="#e8202a" stroke-width="1.100"/><circle cx="82" cy="583.5" r="1.700" fill="#e8202a"/><path d="M55.3 596.0l4.400 4.500l-4.400 4.500" stroke="#404040" stroke-width="1.400" fill="none"/><rect x="70.7" y="596.9000000000001" width="7.6" height="7.600" fill="#4db0f5" stroke="#1b6aa8" stroke-width="1.200"/><rect x="81.5" y="594.7" width="4.500" height="3.200" fill="#4db0f5" stroke="#1b6aa8" stroke-width="1"/><rect x="81.5" y="603.5" width="4.500" height="3.200" fill="#4db0f5" stroke="#1b6aa8" stroke-width="1"/><path d="M78.3 600.7h5.400M83.7 597.9000000000001v5.600" stroke="#1b6aa8" stroke-width="1" fill="none"/><path d="M55.3 618.0l4.400 4.500l-4.400 4.500" stroke="#404040" stroke-width="1.400" fill="none"/><rect x="70.7" y="618.9000000000001" width="7.6" height="7.600" fill="none" stroke="#4a5a66" stroke-width="1.200"/><rect x="81.5" y="616.7" width="4.500" height="3.200" fill="none" stroke="#4a5a66" stroke-width="1"/><rect x="81.5" y="625.5" width="4.500" height="3.200" fill="none" stroke="#4a5a66" stroke-width="1"/><path d="M78.3 622.7h5.400M83.7 619.9000000000001v5.600" stroke="#4a5a66" stroke-width="1" fill="none"/><path d="M55.3 640.0l4.400 4.500l-4.400 4.500" stroke="#404040" stroke-width="1.400" fill="none"/><rect x="70.7" y="640.9000000000001" width="7.6" height="7.600" fill="none" stroke="#4a5a66" stroke-width="1.200"/><rect x="81.5" y="638.7" width="4.500" height="3.200" fill="none" stroke="#4a5a66" stroke-width="1"/><rect x="81.5" y="647.5" width="4.500" height="3.200" fill="none" stroke="#4a5a66" stroke-width="1"/><path d="M78.3 644.7h5.400M83.7 641.9000000000001v5.600" stroke="#4a5a66" stroke-width="1" fill="none"/><path d="M55.3 662.0l4.400 4.500l-4.400 4.500" stroke="#404040" stroke-width="1.400" fill="none"/><rect x="70.7" y="662.9000000000001" width="7.6" height="7.600" fill="none" stroke="#4a5a66" stroke-width="1.200"/><rect x="81.5" y="660.7" width="4.500" height="3.200" fill="none" stroke="#4a5a66" stroke-width="1"/><rect x="81.5" y="669.5" width="4.500" height="3.200" fill="none" stroke="#4a5a66" stroke-width="1"/><path d="M78.3 666.7h5.400M83.7 663.9000000000001v5.600" stroke="#4a5a66" stroke-width="1" fill="none"/><path d="M55.3 684.0l4.400 4.500l-4.400 4.500" stroke="#404040" stroke-width="1.400" fill="none"/><rect x="70.7" y="684.9000000000001" width="7.6" height="7.600" fill="none" stroke="#4a5a66" stroke-width="1.200"/><rect x="81.5" y="682.7" width="4.500" height="3.200" fill="none" stroke="#4a5a66" stroke-width="1"/><rect x="81.5" y="691.5" width="4.500" height="3.200" fill="none" stroke="#4a5a66" stroke-width="1"/><path d="M78.3 688.7h5.400M83.7 685.9000000000001v5.600" stroke="#4a5a66" stroke-width="1" fill="none"/><path d="M55.3 706.0l4.400 4.500l-4.400 4.500" stroke="#404040" stroke-width="1.400" fill="none"/><rect x="70.7" y="706.9000000000001" width="7.6" height="7.600" fill="none" stroke="#4a5a66" stroke-width="1.200"/><rect x="81.5" y="704.7" width="4.500" height="3.200" fill="none" stroke="#4a5a66" stroke-width="1"/><rect x="81.5" y="713.5" width="4.500" height="3.200" fill="none" stroke="#4a5a66" stroke-width="1"/><path d="M78.3 710.7h5.400M83.7 707.9000000000001v5.600" stroke="#4a5a66" stroke-width="1" fill="none"/><path d="M55.3 728.0l4.400 4.500l-4.400 4.500" stroke="#404040" stroke-width="1.400" fill="none"/><rect x="70.7" y="728.9000000000001" width="7.6" height="7.600" fill="none" stroke="#4a5a66" stroke-width="1.200"/><rect x="81.5" y="726.7" width="4.500" height="3.200" fill="none" stroke="#4a5a66" stroke-width="1"/><rect x="81.5" y="735.5" width="4.500" height="3.200" fill="none" stroke="#4a5a66" stroke-width="1"/><path d="M78.3 732.7h5.400M83.7 729.9000000000001v5.600" stroke="#4a5a66" stroke-width="1" fill="none"/><path d="M55.3 750.0l4.400 4.500l-4.400 4.500" stroke="#404040" stroke-width="1.400" fill="none"/><rect x="70.7" y="750.9000000000001" width="7.6" height="7.600" fill="none" stroke="#4a5a66" stroke-width="1.200"/><rect x="81.5" y="748.7" width="4.500" height="3.200" fill="none" stroke="#4a5a66" stroke-width="1"/><rect x="81.5" y="757.5" width="4.500" height="3.200" fill="none" stroke="#4a5a66" stroke-width="1"/><path d="M78.3 754.7h5.400M83.7 751.9000000000001v5.600" stroke="#4a5a66" stroke-width="1" fill="none"/><path d="M34 796.3l4 4l4-4" stroke="#404040" stroke-width="1.300" fill="none"/><rect x="70.500" y="813.5" width="14.500" height="14.500" fill="#4a9fd8" stroke="#1b6aa8" stroke-width="1"/><path d="M70.500 813.5l14.500 14.500M70.500 818.5l9.500 9.500M70.500 823.5l4.500 4.500M75.500 813.5l9.500 9.500M80.500 813.5l4.500 4.500M85 813.5l-14.500 14.500M80 813.5l-9.500 9.500M75 813.5l-4.500 4.500M85 818.5l-9.500 9.500M85 823.5l-4.500 4.500" stroke="#1f5f95" stroke-width="0.700" opacity="0.800"/></svg>
<div class="hdr" style="left:305px;top:78px;width:805px;height:26px;"></div>
<div class="a" style="left:377px;top:82px;width:119px;height:21px;background:#dcdcdc;border:1px solid #bcbcbc;box-sizing:border-box;border-bottom:none;"></div>
<div class="a" style="left:495px;top:80px;width:134px;height:25px;background:#f0f0f0;border:1px solid #bdbdbd;box-sizing:border-box;border-bottom:none;"></div>
<div class="t" style="left:390px;top:88px;font-size:12px;letter-spacing:-0.169px;">Data Manager</div>
<div class="t" style="left:510px;top:87px;font-size:12px;letter-spacing:-0.270px;">Red Equivalente</div>
<div class="hl" style="left:308px;top:107px;width:21px;height:20px;"></div>
<div class="hl" style="left:569px;top:107px;width:21px;height:20px;"></div>
<div class="hl" style="left:690px;top:107px;width:21px;height:20px;"></div>
<div class="hl" style="left:713px;top:107px;width:21px;height:20px;"></div>
<div class="combo" style="left:428px;top:106px;width:65px;height:21px;"></div>
<div class="t" style="left:433px;top:111px;font-size:12px;letter-spacing:-0.300px;transform:scaleX(0.9696);transform-origin:0 0;">Page</div>
<div class="combo" style="left:793px;top:106px;width:69px;height:21px;border-color:#c4c4c4;"></div>
<div class="combo" style="left:862px;top:106px;width:70px;height:21px;border-color:#c4c4c4;"></div>
<div class="t" style="left:799px;top:111px;font-size:12px;color:#a0a0a0;letter-spacing:-0.300px;transform:scaleX(0.9523);transform-origin:0 0;">110 kV</div>
<div class="t" style="left:868px;top:111px;font-size:12px;color:#a0a0a0;letter-spacing:-0.300px;transform:scaleX(0.9255);transform-origin:0 0;">ABC</div>
<div class="canvas" style="left:305px;top:130px;width:805px;height:576px;"></div>
<svg style="left:305px;top:130px;overflow:hidden" width="805" height="576" viewBox="305 130 805 576"><g xml:space="preserve"><rect x="313.500" y="139.500" width="788" height="557" fill="#fff" stroke="#707070" stroke-width="1"/><rect x="465" y="163.5" width="187" height="41.5" fill="#3a3a3a"/><rect x="464" y="162.5" width="187" height="41.5" fill="#c0c0c0" stroke="#000" stroke-width="1"/><text x="517" y="187.10" font-family="Liberation Sans" font-size="11" fill="#000" letter-spacing="-0.046">Task Automation</text><rect x="672.5" y="163.5" width="266.5" height="25.5" fill="#3a3a3a"/><rect x="671.5" y="162.5" width="266.5" height="25.5" fill="#c0c0c0" stroke="#000" stroke-width="1"/><text x="697" y="179.17" font-family="Liberation Sans" font-size="11.2" fill="#000" letter-spacing="-0.276">Evolución de los Modos de Oscilación LINEA</text><rect x="672.5" y="198.5" width="266.5" height="24" fill="#3a3a3a"/><rect x="671.5" y="197.5" width="266.5" height="24" fill="#c0c0c0" stroke="#000" stroke-width="1"/><text x="693" y="213.42" font-family="Liberation Sans" font-size="11.2" fill="#000" letter-spacing="-0.237">Evolución de los Modos de Oscilación CARGA</text><rect x="672.5" y="233.5" width="266.5" height="23.5" fill="#3a3a3a"/><rect x="671.5" y="232.5" width="266.5" height="23.5" fill="#c0c0c0" stroke="#000" stroke-width="1"/><text x="702.2" y="248.17" font-family="Liberation Sans" font-size="11.2" fill="#000" letter-spacing="-0.265">Evolución de los Modos de Oscilación PSS</text><rect x="343.500" y="216.500" width="71" height="31" fill="#fff" stroke="#000" stroke-width="1"/><rect x="348" y="224" width="8.500" height="4.500" fill="#eee0a0"/><rect x="348" y="231" width="8.500" height="4.500" fill="#8a8a8a"/><rect x="348" y="238" width="8.500" height="4.500" fill="#777"/><text x="361" y="229" font-family="Liberation Sans" font-size="5.4" fill="#444" text-anchor="start" textLength="20.4" lengthAdjust="spacingAndGlyphs">Inactive</text><text x="361" y="236" font-family="Liberation Sans" font-size="5.4" fill="#444" text-anchor="start" textLength="46" lengthAdjust="spacingAndGlyphs">Out of Calculation</text><text x="361" y="243" font-family="Liberation Sans" font-size="5.4" fill="#444" text-anchor="start" textLength="32.8" lengthAdjust="spacingAndGlyphs">De-energized</text><text x="686" y="263" font-family="Liberation Sans" font-size="5.600" fill="#2a2af0" textLength="239.600" lengthAdjust="spacingAndGlyphs">Reglamento UE 2016/631 y aplicación de la Norma Técnica de Supervisión (NTS) versión 2.1:</text><text x="686" y="271" font-family="Liberation Sans" font-size="5.600" fill="#2a2af0" textLength="236" lengthAdjust="spacingAndGlyphs">- Sección 5.9. Reemplazar MGES en Nudo 1_GEN por MGES a evaluar en base 1500MVA</text><text x="686" y="279" font-family="Liberation Sans" font-size="5.600" fill="#2a2af0" textLength="118.800" lengthAdjust="spacingAndGlyphs">- Sección 5.10. Añadir MPE a Nudo 2_GEN_T</text><path d="M603.5 336V452.500M696.5 336V592.500M905.5 336V452.500M998.5 336V452.500" stroke="#000" fill="none" stroke-width="1.300"/><rect x="603.5" y="420.3" width="18" height="32.2" stroke="#000" fill="none" stroke-width="1"/><path d="M604.1 420.3v32.2" stroke="#000" fill="none" stroke-width="1.600"/><rect x="905.5" y="420.3" width="18.2" height="32.2" stroke="#000" fill="none" stroke-width="1"/><path d="M906.1 420.3v32.2" stroke="#000" fill="none" stroke-width="1.600"/><rect x="998.5" y="420.3" width="18.2" height="32.2" stroke="#000" fill="none" stroke-width="1"/><path d="M999.1 420.3v32.2" stroke="#000" fill="none" stroke-width="1.600"/><rect x="696.5" y="559.3" width="18.2" height="33.4" stroke="#000" fill="none" stroke-width="1"/><path d="M697.1 559.3v33.4" stroke="#000" fill="none" stroke-width="1.600"/><text x="609.1999999999999" y="436.5" font-family="Liberation Sans" font-size="5.2" fill="#2a2a2a" text-anchor="middle" transform="rotate(-90 609.1999999999999 436.5)">19.5</text><text x="614.4" y="436.5" font-family="Liberation Sans" font-size="5.2" fill="#2a2a2a" text-anchor="middle" transform="rotate(-90 614.4 436.5)">1.03</text><text x="619.6" y="436.5" font-family="Liberation Sans" font-size="5.2" fill="#2a2a2a" text-anchor="middle" transform="rotate(-90 619.6 436.5)">37.7</text><text x="911.1999999999999" y="436.5" font-family="Liberation Sans" font-size="5.2" fill="#2a2a2a" text-anchor="middle" transform="rotate(-90 911.1999999999999 436.5)">230.0</text><text x="916.4" y="436.5" font-family="Liberation Sans" font-size="5.2" fill="#2a2a2a" text-anchor="middle" transform="rotate(-90 916.4 436.5)">1.00</text><text x="921.6" y="436.5" font-family="Liberation Sans" font-size="5.2" fill="#2a2a2a" text-anchor="middle" transform="rotate(-90 921.6 436.5)">-6.7</text><text x="1004.1999999999999" y="436.5" font-family="Liberation Sans" font-size="5.2" fill="#2a2a2a" text-anchor="middle" transform="rotate(-90 1004.1999999999999 436.5)">19.1</text><text x="1009.4" y="436.5" font-family="Liberation Sans" font-size="5.2" fill="#2a2a2a" text-anchor="middle" transform="rotate(-90 1009.4 436.5)">1.01</text><text x="1014.6" y="436.5" font-family="Liberation Sans" font-size="5.2" fill="#2a2a2a" text-anchor="middle" transform="rotate(-90 1014.6 436.5)">0.0</text><text x="702.1999999999999" y="576" font-family="Liberation Sans" font-size="5.2" fill="#2a2a2a" text-anchor="middle" transform="rotate(-90 702.1999999999999 576)">230.0</text><text x="707.4" y="576" font-family="Liberation Sans" font-size="5.2" fill="#2a2a2a" text-anchor="middle" transform="rotate(-90 707.4 576)">1.00</text><text x="712.6" y="576" font-family="Liberation Sans" font-size="5.2" fill="#2a2a2a" text-anchor="middle" transform="rotate(-90 712.6 576)">30.2</text><path d="M533.00 347.95H541.00M546.60 347.95H554.80M561.00 347.95H570.00M533.00 395.05H538.50M544.00 395.05H552.80M558.40 395.05H567.00M533.95 347.00V356.70M533.95 362.00V370.90M533.95 376.80V384.70M533.95 391.00V396.00M569.05 354.00V362.30M569.05 368.00V376.50M569.05 382.70V391.00" stroke="#0a0aff" stroke-width="1.900" fill="none"/><circle cx="557" cy="371.5" r="6.500" stroke="#000" fill="none" stroke-width="1"/><text x="559.3" y="371.8" font-family="Liberation Sans" font-size="6.8" fill="#111" text-anchor="middle" transform="rotate(-90 559.3 371.8)" font-weight="bold">G</text><path d="M563.500 371.5H574.500M592 371.5H614.400M685.400 371.5H696.5" stroke="#000" fill="none" stroke-width="1"/><path d="M558.700 379.200v3.800h-6.200" stroke="#000" fill="none" stroke-width="1.300"/><path d="M550 383l3.200-2.800v5.600z" fill="#000"/><text x="541" y="373.5" font-family="Liberation Sans" font-size="5" fill="#444" text-anchor="middle" transform="rotate(-90 541 373.5)">MGES_1</text><text x="546.7" y="373.5" font-family="Liberation Sans" font-size="5" fill="#444" text-anchor="middle" transform="rotate(-90 546.7 373.5)">93.0</text><text x="579.6999999999999" y="372.5" font-family="Liberation Sans" font-size="5.2" fill="#2a2a2a" text-anchor="middle" transform="rotate(-90 579.6999999999999 372.5)">1350.0</text><text x="584.9" y="372.5" font-family="Liberation Sans" font-size="5.2" fill="#2a2a2a" text-anchor="middle" transform="rotate(-90 584.9 372.5)">395.1</text><text x="590.1" y="372.5" font-family="Liberation Sans" font-size="5.2" fill="#2a2a2a" text-anchor="middle" transform="rotate(-90 590.1 372.5)">41.495</text><rect x="595.6" y="369.1" width="4.8" height="4.8" fill="#000"/><circle cx="603.5" cy="371.5" r="2.45" fill="#000"/><rect x="607.0" y="369.1" width="4.8" height="4.8" fill="#000"/><text x="618.1999999999999" y="372.5" font-family="Liberation Sans" font-size="5.2" fill="#2a2a2a" text-anchor="middle" transform="rotate(-90 618.1999999999999 372.5)">1350.0</text><text x="623.4" y="372.5" font-family="Liberation Sans" font-size="5.2" fill="#2a2a2a" text-anchor="middle" transform="rotate(-90 623.4 372.5)">395.1</text><text x="628.6" y="372.5" font-family="Liberation Sans" font-size="5.2" fill="#2a2a2a" text-anchor="middle" transform="rotate(-90 628.6 372.5)">41.495</text><circle cx="645.9" cy="371.5" r="6.9" stroke="#000" fill="none" stroke-width="1"/><circle cx="654.2" cy="371.5" r="6.9" stroke="#000" fill="none" stroke-width="1"/><path d="M642.2 369.4L645.1 371.9L642.2 374.0" stroke="#000" fill="none" stroke-width="1.150"/><path d="M657.8000000000001 369.4L655.3000000000001 371.9L657.8000000000001 374.0" stroke="#000" fill="none" stroke-width="1.150"/><path d="M645.1 371.9V376.1H637.6" stroke="#000" fill="none" stroke-width="1.300"/><path d="M635.9 376.1l3.200-3v6z" fill="#000"/><path d="M637.0 373.1v6" stroke="#000" fill="none" stroke-width="1.400"/><path d="M655.3000000000001 371.9V376.1H661.7" stroke="#000" fill="none" stroke-width="1.300"/><path d="M664.9000000000001 376.1l-2.800-3.200l-2 3.200l2 3.200z" fill="#000"/><path d="M632 371.5H639M661.100 371.5H667.800" stroke="#000" fill="none" stroke-width="1"/><text x="648.5" y="353" font-family="Liberation Sans" font-size="5" fill="#444" text-anchor="middle">TRF_2_1</text><text x="648.5" y="359" font-family="Liberation Sans" font-size="5" fill="#444" text-anchor="middle">91.0</text><text x="673.1999999999999" y="373.0" font-family="Liberation Sans" font-size="5.2" fill="#2a2a2a" text-anchor="middle" transform="rotate(-90 673.1999999999999 373.0)">-1350.0</text><text x="678.4" y="373.0" font-family="Liberation Sans" font-size="5.2" fill="#2a2a2a" text-anchor="middle" transform="rotate(-90 678.4 373.0)">-198.9</text><text x="683.6" y="373.0" font-family="Liberation Sans" font-size="5.2" fill="#2a2a2a" text-anchor="middle" transform="rotate(-90 683.6 373.0)">3.425</text><rect x="688.1" y="369.1" width="4.8" height="4.8" fill="#000"/><circle cx="696.5" cy="371.5" r="2.45" fill="#000"/><text x="553.5" y="418" font-family="Liberation Sans" font-size="7.8" fill="#2a2af0" text-anchor="middle">MGES</text><rect x="653.8" y="316.30" width="15" height="3.47" rx="1.300" fill="#fff" stroke="#000" stroke-width="1.100"/><rect x="653.8" y="320.48" width="15" height="3.47" rx="1.300" fill="#fff" stroke="#000" stroke-width="1.100"/><rect x="653.8" y="324.65" width="15" height="3.47" rx="1.300" fill="#fff" stroke="#000" stroke-width="1.100"/><rect x="653.8" y="328.82" width="15" height="3.47" rx="1.300" fill="#fff" stroke="#000" stroke-width="1.100"/><path d="M656.4 316.3v16.0M661.8 316.3v16.0" stroke="#000" fill="none" stroke-width="1.300"/><text x="680.39" y="346.8" font-family="Liberation Sans" font-size="7.2" fill="#333" text-anchor="start" transform="rotate(-90 680.39 346.8)" textLength="37.8" lengthAdjust="spacingAndGlyphs">Boundary ..</text><circle cx="696.5" cy="348.5" r="2.45" fill="#000"/><rect x="700.1" y="346.1" width="4.8" height="4.8" fill="#000"/><path d="M696.5 348.5H707M725 348.5H792.600M805.200 348.5H876.800M894 348.5H905.5" stroke="#000" fill="none" stroke-width="1"/><text x="711.6999999999999" y="349.5" font-family="Liberation Sans" font-size="5.2" fill="#2a2a2a" text-anchor="middle" transform="rotate(-90 711.6999999999999 349.5)">100.0</text><text x="716.9" y="349.5" font-family="Liberation Sans" font-size="5.2" fill="#2a2a2a" text-anchor="middle" transform="rotate(-90 716.9 349.5)">33.3</text><text x="722.1" y="349.5" font-family="Liberation Sans" font-size="5.2" fill="#2a2a2a" text-anchor="middle" transform="rotate(-90 722.1 349.5)">0.266</text><path d="M798.900 355.400a7 7 0 1 1 7-7" stroke="#000" fill="none" stroke-width="1"/><path d="M792 348.5h6.900v7" stroke="#000" fill="none" stroke-width="1"/><text x="799" y="332.8" font-family="Liberation Sans" font-size="5" fill="#444" text-anchor="middle">Linea_2_3</text><text x="799" y="338.5" font-family="Liberation Sans" font-size="5" fill="#444" text-anchor="middle">105.4</text><text x="882.6999999999999" y="349.5" font-family="Liberation Sans" font-size="5.2" fill="#2a2a2a" text-anchor="middle" transform="rotate(-90 882.6999999999999 349.5)">-100.0</text><text x="887.9" y="349.5" font-family="Liberation Sans" font-size="5.2" fill="#2a2a2a" text-anchor="middle" transform="rotate(-90 887.9 349.5)">33.3</text><text x="893.1" y="349.5" font-family="Liberation Sans" font-size="5.2" fill="#2a2a2a" text-anchor="middle" transform="rotate(-90 893.1 349.5)">0.266</text><rect x="897.5" y="346.1" width="4.8" height="4.8" fill="#000"/><circle cx="905.5" cy="348.5" r="2.45" fill="#000"/><circle cx="696.5" cy="394.5" r="2.45" fill="#000"/><rect x="700.1" y="392.1" width="4.8" height="4.8" fill="#000"/><path d="M696.5 394.5H707M725 394.5H754.500V438.300" stroke="#000" fill="none" stroke-width="1"/><text x="711.6999999999999" y="395.5" font-family="Liberation Sans" font-size="5.2" fill="#2a2a2a" text-anchor="middle" transform="rotate(-90 711.6999999999999 395.5)">2600.0</text><text x="716.9" y="395.5" font-family="Liberation Sans" font-size="5.2" fill="#2a2a2a" text-anchor="middle" transform="rotate(-90 716.9 395.5)">0.0</text><text x="722.1" y="395.5" font-family="Liberation Sans" font-size="5.2" fill="#2a2a2a" text-anchor="middle" transform="rotate(-90 722.1 395.5)">6.527</text><path d="M750.700 438.300h7.600l-3.800 9.200z" fill="#fff" stroke="#000" stroke-width="1"/><text x="753" y="454.5" font-family="Liberation Sans" font-size="5" fill="#444" text-anchor="middle">CARGA_2</text><path d="M847 438.300V394.5H876.800M894 394.5H905.5" stroke="#000" fill="none" stroke-width="1"/><rect x="897.5" y="392.1" width="4.8" height="4.8" fill="#000"/><circle cx="905.5" cy="394.5" r="2.45" fill="#000"/><text x="882.6999999999999" y="395.5" font-family="Liberation Sans" font-size="5.2" fill="#2a2a2a" text-anchor="middle" transform="rotate(-90 882.6999999999999 395.5)">4000.0</text><text x="887.9" y="395.5" font-family="Liberation Sans" font-size="5.2" fill="#2a2a2a" text-anchor="middle" transform="rotate(-90 887.9 395.5)">0.0</text><text x="893.1" y="395.5" font-family="Liberation Sans" font-size="5.2" fill="#2a2a2a" text-anchor="middle" transform="rotate(-90 893.1 395.5)">10.041</text><path d="M843.200 438.300h7.600l-3.800 9.200z" fill="#fff" stroke="#000" stroke-width="1"/><text x="846" y="454.5" font-family="Liberation Sans" font-size="5" fill="#444" text-anchor="middle">CARGA_3</text><circle cx="905.5" cy="371.5" r="2.45" fill="#000"/><rect x="909.1" y="369.1" width="4.8" height="4.8" fill="#000"/><path d="M905.5 371.5H917M934 371.5H941M963.300 371.5H969.500M986 371.5H1010M1027 371.5H1038.500" stroke="#000" fill="none" stroke-width="1"/><text x="921.6999999999999" y="373.0" font-family="Liberation Sans" font-size="5.2" fill="#2a2a2a" text-anchor="middle" transform="rotate(-90 921.6999999999999 373.0)">-3600.0</text><text x="926.9" y="373.0" font-family="Liberation Sans" font-size="5.2" fill="#2a2a2a" text-anchor="middle" transform="rotate(-90 926.9 373.0)">-33.3</text><text x="932.1" y="373.0" font-family="Liberation Sans" font-size="5.2" fill="#2a2a2a" text-anchor="middle" transform="rotate(-90 932.1 373.0)">9.790</text><circle cx="947.8" cy="371.5" r="6.9" stroke="#000" fill="none" stroke-width="1"/><circle cx="956.4" cy="371.5" r="6.9" stroke="#000" fill="none" stroke-width="1"/><path d="M944.1 369.4L947.0 371.9L944.1 374.0" stroke="#000" fill="none" stroke-width="1.150"/><path d="M960.0 369.4L957.5 371.9L960.0 374.0" stroke="#000" fill="none" stroke-width="1.150"/><path d="M947.0 371.9V376.1H939.5" stroke="#000" fill="none" stroke-width="1.300"/><path d="M937.8 376.1l3.200-3v6z" fill="#000"/><path d="M938.9 373.1v6" stroke="#000" fill="none" stroke-width="1.400"/><path d="M957.5 371.9V376.1H963.9" stroke="#000" fill="none" stroke-width="1.300"/><path d="M967.1 376.1l-2.800-3.200l-2 3.200l2 3.200z" fill="#000"/><text x="950.5" y="353" font-family="Liberation Sans" font-size="5" fill="#444" text-anchor="middle">TRF_3_4</text><text x="950.5" y="359" font-family="Liberation Sans" font-size="5" fill="#444" text-anchor="middle">78.0</text><text x="974.6999999999999" y="372.5" font-family="Liberation Sans" font-size="5.2" fill="#2a2a2a" text-anchor="middle" transform="rotate(-90 974.6999999999999 372.5)">3600.0</text><text x="979.9" y="372.5" font-family="Liberation Sans" font-size="5.2" fill="#2a2a2a" text-anchor="middle" transform="rotate(-90 979.9 372.5)">459.7</text><text x="985.1" y="372.5" font-family="Liberation Sans" font-size="5.2" fill="#2a2a2a" text-anchor="middle" transform="rotate(-90 985.1 372.5)">110.513</text><rect x="990.1" y="369.1" width="4.8" height="4.8" fill="#000"/><circle cx="998.5" cy="371.5" r="2.45" fill="#000"/><rect x="1002.1" y="369.1" width="4.8" height="4.8" fill="#000"/><text x="1014.1999999999999" y="372.5" font-family="Liberation Sans" font-size="5.2" fill="#2a2a2a" text-anchor="middle" transform="rotate(-90 1014.1999999999999 372.5)">3600.0</text><text x="1019.4" y="372.5" font-family="Liberation Sans" font-size="5.2" fill="#2a2a2a" text-anchor="middle" transform="rotate(-90 1019.4 372.5)">459.7</text><text x="1024.6000000000001" y="372.5" font-family="Liberation Sans" font-size="5.2" fill="#2a2a2a" text-anchor="middle" transform="rotate(-90 1024.6000000000001 372.5)">110.513</text><path d="M1032.30 347.95H1040.30M1045.90 347.95H1054.10M1060.30 347.95H1069.30M1032.30 395.05H1037.80M1043.30 395.05H1052.10M1057.70 395.05H1066.30M1033.25 347.00V356.70M1033.25 362.00V370.90M1033.25 376.80V384.70M1033.25 391.00V396.00M1068.35 354.00V362.30M1068.35 368.00V376.50M1068.35 382.70V391.00" stroke="#0a0aff" stroke-width="1.900" fill="none"/><circle cx="1045" cy="371.5" r="6.500" stroke="#000" fill="none" stroke-width="1"/><text x="1042.7" y="371.8" font-family="Liberation Sans" font-size="6.8" fill="#111" text-anchor="middle" transform="rotate(90 1042.7 371.8)" font-weight="bold">G</text><path d="M1044 363.200v-3.400h6" stroke="#000" fill="none" stroke-width="1.300"/><path d="M1052.600 359.800l-3.200-2.800v5.600z" fill="#000"/><text x="1058.7" y="373.5" font-family="Liberation Sans" font-size="5" fill="#444" text-anchor="middle" transform="rotate(-90 1058.7 373.5)">MGES_4</text><text x="1064.2" y="373.5" font-family="Liberation Sans" font-size="5" fill="#444" text-anchor="middle" transform="rotate(-90 1064.2 373.5)">78.6</text><text x="1039.1" y="413" font-family="Liberation Sans" font-size="7.6" fill="#2a2af0" text-anchor="start" textLength="27" lengthAdjust="spacingAndGlyphs">Sistema</text><text x="1040.1" y="423" font-family="Liberation Sans" font-size="7.6" fill="#2a2af0" text-anchor="start" textLength="25" lengthAdjust="spacingAndGlyphs">Externo</text><text x="605.26" y="470.9" font-family="Liberation Sans" font-size="7.4" fill="#222" text-anchor="start" transform="rotate(-90 605.26 470.9)" textLength="15.0" lengthAdjust="spacingAndGlyphs">GEN</text><text x="906.12" y="485.7" font-family="Liberation Sans" font-size="7" fill="#222" text-anchor="start" transform="rotate(-90 906.12 485.7)" textLength="27.4" lengthAdjust="spacingAndGlyphs">3  INF  T</text><text x="998.92" y="475.2" font-family="Liberation Sans" font-size="7" fill="#222" text-anchor="start" transform="rotate(-90 998.92 475.2)" textLength="19.0" lengthAdjust="spacingAndGlyphs">4  INF</text><text x="697.02" y="628.6" font-family="Liberation Sans" font-size="7" fill="#222" text-anchor="start" transform="rotate(-90 697.02 628.6)" textLength="30.9" lengthAdjust="spacingAndGlyphs">2  GEN  T</text><path d="M429.5 499.300V568.600M533.5 476V603.700M615.5 476V603.700" stroke="#000" fill="none" stroke-width="1.300"/><rect x="411.5" y="499.3" width="18" height="22.2" stroke="#000" fill="none" stroke-width="1"/><path d="M429.0 499.3v22.2" stroke="#000" fill="none" stroke-width="1.600"/><rect x="516.4" y="476" width="17.3" height="22.5" stroke="#000" fill="none" stroke-width="1"/><path d="M533.1999999999999 476v22.5" stroke="#000" fill="none" stroke-width="1.600"/><rect x="597.4" y="476" width="18.2" height="22.5" stroke="#000" fill="none" stroke-width="1"/><path d="M615.1 476v22.5" stroke="#000" fill="none" stroke-width="1.600"/><text x="416.7" y="510.5" font-family="Liberation Sans" font-size="4.4" fill="#2a2a2a" text-anchor="middle" transform="rotate(-90 416.7 510.5)">0.7</text><text x="421.9" y="510.5" font-family="Liberation Sans" font-size="4.4" fill="#2a2a2a" text-anchor="middle" transform="rotate(-90 421.9 510.5)">1.00</text><text x="427.09999999999997" y="510.5" font-family="Liberation Sans" font-size="4.4" fill="#2a2a2a" text-anchor="middle" transform="rotate(-90 427.09999999999997 510.5)">-62.9</text><text x="521.1999999999999" y="487.5" font-family="Liberation Sans" font-size="4.4" fill="#2a2a2a" text-anchor="middle" transform="rotate(-90 521.1999999999999 487.5)">19.9</text><text x="526.4" y="487.5" font-family="Liberation Sans" font-size="4.4" fill="#2a2a2a" text-anchor="middle" transform="rotate(-90 526.4 487.5)">0.99</text><text x="531.6" y="487.5" font-family="Liberation Sans" font-size="4.4" fill="#2a2a2a" text-anchor="middle" transform="rotate(-90 531.6 487.5)">64.5</text><text x="602.6999999999999" y="487.5" font-family="Liberation Sans" font-size="4.4" fill="#2a2a2a" text-anchor="middle" transform="rotate(-90 602.6999999999999 487.5)">230.0</text><text x="607.9" y="487.5" font-family="Liberation Sans" font-size="4.4" fill="#2a2a2a" text-anchor="middle" transform="rotate(-90 607.9 487.5)">1.00</text><text x="613.1" y="487.5" font-family="Liberation Sans" font-size="4.4" fill="#2a2a2a" text-anchor="middle" transform="rotate(-90 613.1 487.5)">30.2</text><circle cx="382.900" cy="534.5" r="7.500" stroke="#000" fill="none" stroke-width="1.100"/><path d="M382.900 534.5v-5.800M382.900 534.5l-5.300 2.600M382.900 534.5l5 3.300" stroke="#000" fill="none" stroke-width="1.500"/><text x="367.02" y="548.2" font-family="Liberation Sans" font-size="5.6" fill="#444" text-anchor="start" transform="rotate(-90 367.02 548.2)" textLength="24.2" lengthAdjust="spacingAndGlyphs">WT Type..</text><path d="M390.400 534.5H401M418 534.5H441M457.700 534.5H465M487 534.5H504.500M522 534.5H545.800M562 534.5H563.500M585.800 534.5H587M603.900 534.5H696.5" stroke="#000" fill="none" stroke-width="1"/><text x="405.2" y="535.5" font-family="Liberation Sans" font-size="5.2" fill="#2a2a2a" text-anchor="middle" transform="rotate(-90 405.2 535.5)">1259.1</text><text x="410.4" y="535.5" font-family="Liberation Sans" font-size="5.2" fill="#2a2a2a" text-anchor="middle" transform="rotate(-90 410.4 535.5)">-0.0</text><text x="415.59999999999997" y="535.5" font-family="Liberation Sans" font-size="5.2" fill="#2a2a2a" text-anchor="middle" transform="rotate(-90 415.59999999999997 535.5)">1136.0..</text><rect x="421.0" y="532.1" width="4.8" height="4.8" fill="#000"/><circle cx="429.5" cy="534.5" r="2.45" fill="#000"/><rect x="433.1" y="532.1" width="4.8" height="4.8" fill="#000"/><text x="444.7" y="535.5" font-family="Liberation Sans" font-size="5.2" fill="#2a2a2a" text-anchor="middle" transform="rotate(-90 444.7 535.5)">1259.1</text><text x="449.9" y="535.5" font-family="Liberation Sans" font-size="5.2" fill="#2a2a2a" text-anchor="middle" transform="rotate(-90 449.9 535.5)">-0.0</text><text x="455.09999999999997" y="535.5" font-family="Liberation Sans" font-size="5.2" fill="#2a2a2a" text-anchor="middle" transform="rotate(-90 455.09999999999997 535.5)">1136.0..</text><circle cx="471.6" cy="534.5" r="6.8" stroke="#000" fill="none" stroke-width="1"/><circle cx="480" cy="534.5" r="6.8" stroke="#000" fill="none" stroke-width="1"/><path d="M468.6 532.3L471.0 534.5L473.4 532.3M471.0 534.5V537.5" stroke="#000" fill="none" stroke-width="1.150"/><path d="M480.3 532.1l4 2.400l-4 2.400z" stroke="#000" fill="none" stroke-width="1"/><path d="M462.500 527v-0.500M467 532.500v-3.500h-4.500" stroke="#000" fill="none" stroke-width="1.100"/><path d="M460.800 529l2.800-2.600v5.200z" fill="#000"/><text x="474.4" y="515" font-family="Liberation Sans" font-size="5" fill="#444" text-anchor="middle">TrfWT</text><text x="474.4" y="520.5" font-family="Liberation Sans" font-size="5" fill="#444" text-anchor="middle">75.6</text><text x="509.2" y="536.0" font-family="Liberation Sans" font-size="5.2" fill="#2a2a2a" text-anchor="middle" transform="rotate(-90 509.2 536.0)">-1250.0</text><text x="514.4" y="536.0" font-family="Liberation Sans" font-size="5.2" fill="#2a2a2a" text-anchor="middle" transform="rotate(-90 514.4 536.0)">62.0</text><text x="519.6" y="536.0" font-family="Liberation Sans" font-size="5.2" fill="#2a2a2a" text-anchor="middle" transform="rotate(-90 519.6 536.0)">39.203</text><rect x="525.5" y="532.1" width="4.8" height="4.8" fill="#000"/><circle cx="533.5" cy="534.5" r="2.45" fill="#000"/><rect x="537.5" y="532.1" width="4.8" height="4.8" fill="#000"/><text x="549.1999999999999" y="536.0" font-family="Liberation Sans" font-size="5.2" fill="#2a2a2a" text-anchor="middle" transform="rotate(-90 549.1999999999999 536.0)">1250.0</text><text x="554.4" y="536.0" font-family="Liberation Sans" font-size="5.2" fill="#2a2a2a" text-anchor="middle" transform="rotate(-90 554.4 536.0)">-62.0</text><text x="559.6" y="536.0" font-family="Liberation Sans" font-size="5.2" fill="#2a2a2a" text-anchor="middle" transform="rotate(-90 559.6 536.0)">39.203</text><circle cx="570.3" cy="534.5" r="6.8" stroke="#000" fill="none" stroke-width="1"/><circle cx="579" cy="534.5" r="6.8" stroke="#000" fill="none" stroke-width="1"/><path d="M567.3 532.3L569.6999999999999 534.5L572.0999999999999 532.3M569.6999999999999 534.5V537.5" stroke="#000" fill="none" stroke-width="1.150"/><path d="M579.3 532.1l4 2.400l-4 2.400z" stroke="#000" fill="none" stroke-width="1"/><path d="M563.500 529.500h4v3.500" stroke="#000" fill="none" stroke-width="1.100"/><text x="573" y="515" font-family="Liberation Sans" font-size="5" fill="#444" text-anchor="middle">PlantTrans..</text><text x="573" y="520.5" font-family="Liberation Sans" font-size="5" fill="#444" text-anchor="middle">75.6</text><text x="591.6999999999999" y="536.0" font-family="Liberation Sans" font-size="5.2" fill="#2a2a2a" text-anchor="middle" transform="rotate(-90 591.6999999999999 536.0)">-1250.0</text><text x="596.9" y="536.0" font-family="Liberation Sans" font-size="5.2" fill="#2a2a2a" text-anchor="middle" transform="rotate(-90 596.9 536.0)">165.6</text><text x="602.1" y="536.0" font-family="Liberation Sans" font-size="5.2" fill="#2a2a2a" text-anchor="middle" transform="rotate(-90 602.1 536.0)">3.414</text><rect x="607.0" y="532.1" width="4.8" height="4.8" fill="#000"/><circle cx="615.5" cy="534.5" r="2.45" fill="#000"/><circle cx="696.5" cy="534.5" r="2.45" fill="#000"/><text x="433.26" y="496.8" font-family="Liberation Sans" font-size="7.4" fill="#222" text-anchor="start" transform="rotate(-90 433.26 496.8)" textLength="25.9" lengthAdjust="spacingAndGlyphs">WT Ty..</text><text x="537.66" y="474" font-family="Liberation Sans" font-size="7.4" fill="#222" text-anchor="start" transform="rotate(-90 537.66 474)" textLength="34" lengthAdjust="spacingAndGlyphs">Plant LV ..</text><text x="619.26" y="475.9" font-family="Liberation Sans" font-size="7.4" fill="#222" text-anchor="start" transform="rotate(-90 619.26 475.9)" textLength="19.2" lengthAdjust="spacingAndGlyphs">Plan..</text><rect x="561.300" y="579" width="15.400" height="25.500" stroke="#000" fill="none" stroke-width="1"/><rect x="666.5" y="515.00" width="15.3" height="3.30" rx="1.300" fill="#fff" stroke="#000" stroke-width="1.100"/><rect x="666.5" y="519.00" width="15.3" height="3.30" rx="1.300" fill="#fff" stroke="#000" stroke-width="1.100"/><rect x="666.5" y="523.00" width="15.3" height="3.30" rx="1.300" fill="#fff" stroke="#000" stroke-width="1.100"/><rect x="666.5" y="527.00" width="15.3" height="3.30" rx="1.300" fill="#fff" stroke="#000" stroke-width="1.100"/><path d="M669.1 515v15.3M674.5 515v15.3" stroke="#000" fill="none" stroke-width="1.300"/><text x="659.32" y="536.8" font-family="Liberation Sans" font-size="7" fill="#333" text-anchor="start" transform="rotate(-90 659.32 536.8)" textLength="30.1" lengthAdjust="spacingAndGlyphs">Boundary</text><text x="652" y="522" font-family="Liberation Sans" font-size="4.6" fill="#444" text-anchor="middle">Breaker/Sw..</text><text x="653" y="527.5" font-family="Liberation Sans" font-size="4.6" fill="#444" text-anchor="middle">P..</text><rect x="313.500" y="644.500" width="186" height="51.800" fill="#fff" stroke="#000" stroke-width="1"/><path d="M313.500 654.500h186M313.500 663.500h186M419.500 654.500v41.800" stroke="#000" fill="none" stroke-width="1"/><text x="315" y="649" font-family="Liberation Sans" font-size="7" fill="#4a4a4a" text-anchor="start">Modal/Eigenvalue Analysis</text><text x="315" y="660" font-family="Liberation Sans" font-size="7.25" fill="#4a4a4a" text-anchor="start">Nodes</text><text x="421" y="660" font-family="Liberation Sans" font-size="7.25" fill="#4a4a4a" text-anchor="start">Branches</text><clipPath id="cl1"><rect x="313" y="663" width="106.500" height="34"/></clipPath><g clip-path="url(#cl1)"><text x="315" y="670" font-family="Liberation Sans" font-size="7.15" fill="#4a4a4a" text-anchor="start">Line-Line Voltage, Magnitude [kV]</text></g><text x="315" y="681" font-family="Liberation Sans" font-size="7.15" fill="#4a4a4a" text-anchor="start">Voltage, Magnitude [p.u.]</text><text x="315" y="691" font-family="Liberation Sans" font-size="7.15" fill="#4a4a4a" text-anchor="start">Voltage, Angle [deg]</text><text x="421" y="670" font-family="Liberation Sans" font-size="7.15" fill="#4a4a4a" text-anchor="start">Active Power [MW]</text><text x="421" y="681" font-family="Liberation Sans" font-size="7.15" fill="#4a4a4a" text-anchor="start">Reactive Power [Mvar]</text><text x="421" y="691" font-family="Liberation Sans" font-size="7.15" fill="#4a4a4a" text-anchor="start">Current, Magnitude [kA]</text><rect x="759.500" y="654.500" width="344" height="41.800" fill="#fff" stroke="#000" stroke-width="1"/><path d="M845.500 654.500v41.800M1017.500 654.500v41.800M759.500 682.500h86M845.500 665.500h258M1017.500 675.500h86M1017.500 686.500h86" stroke="#000" fill="none" stroke-width="1"/><text x="931.5" y="662" font-family="Liberation Sans" font-size="7.25" fill="#4a4a4a" text-anchor="middle">DIgSILENT Ibérica</text><clipPath id="cl2"><rect x="846" y="665" width="171" height="31"/></clipPath><g clip-path="url(#cl2)"><text x="936.5" y="675" font-family="Liberation Sans" font-size="7.25" fill="#4a4a4a" text-anchor="middle">Red eléctrica equivalente para el estudio</text><text x="940" y="683" font-family="Liberation Sans" font-size="7.25" fill="#4a4a4a" text-anchor="middle">del amortiguamiento de oscilaciones de potencia</text><text x="851" y="691" font-family="Liberation Sans" font-size="7.25" fill="#4a4a4a" text-anchor="start">(Norma Técnica de Supervisión 2.1 - Reglamento UE</text></g><text x="763" y="692" font-family="Liberation Sans" font-size="7.25" fill="#4a4a4a" text-anchor="start">PowerFactory 2025 SP3</text><text x="1019" y="662" font-family="Liberation Sans" font-size="7.25" fill="#4a4a4a" text-anchor="start">Project: REE</text><text x="1019" y="673" font-family="Liberation Sans" font-size="7.25" fill="#4a4a4a" text-anchor="start">Graphic: Red Equivalente</text><text x="1019" y="683" font-family="Liberation Sans" font-size="7.25" fill="#4a4a4a" text-anchor="start">Date:</text><text x="1044.6" y="683" font-family="Liberation Sans" font-size="7.25" fill="#4a4a4a" text-anchor="start">18/11/2025</text><text x="1019" y="693" font-family="Liberation Sans" font-size="7.25" fill="#4a4a4a" text-anchor="start">Annex:</text><text x="1047" y="693" font-family="Liberation Sans" font-size="7.25" fill="#4a4a4a" text-anchor="start">5.9 5.10</text><path d="M888 145.500C905 147 925 149 932 158C938 167 940 185 931 194C920 199 880 197 800 195.800C760 194 715 190 690 186C668 182 650 178 654 167C657 155 675 147 720 143.500C760 142 850 144.500 905 147.500" stroke="#ff0000" stroke-width="2" fill="none"/></g></svg>
<svg style="left:0px;top:0px;" width="1919" height="130" viewBox="0 0 1919 130"><path d="M311 89.0l6 6l6 -6" stroke="#333" stroke-width="1.6" fill="none"/><path d="M347 92h-11.500M340 87.3l-4.700 4.700l4.700 4.700" stroke="#404040" stroke-width="1.500" fill="none"/><path d="M359 92h11.500M366 87.3l4.700 4.700l-4.700 4.700" stroke="#a0a0a0" stroke-width="1.500" fill="none"/><path d="M479.6 89.6l6.8 6.8M486.4 89.6l-6.8 6.8" stroke="#4a5a66" stroke-width="1.6" fill="none"/><path d="M611.1 89.6l6.8 6.8M617.9 89.6l-6.8 6.8" stroke="#4a5a66" stroke-width="1.6" fill="none"/><path d="M635.5 92h11.0M641 86.5v11.0" stroke="#303030" stroke-width="1.7" fill="none"/><rect x="355" y="109" width="1" height="16" fill="#d2d2d2"/><rect x="564" y="109" width="1" height="16" fill="#d2d2d2"/><rect x="616" y="109" width="1" height="16" fill="#d2d2d2"/><rect x="737" y="109" width="1" height="16" fill="#d2d2d2"/><rect x="789" y="109" width="1" height="16" fill="#d2d2d2"/><rect x="934" y="109" width="1" height="16" fill="#d2d2d2"/><rect x="986" y="109" width="1" height="16" fill="#d2d2d2"/><path d="M315 116.500v-3.500a3.800 3.800 0 0 1 7.600 0v3.500" stroke="#4a5a66" stroke-width="2" fill="none"/><rect x="312.700" y="116" width="12.200" height="9.200" rx="0.800" fill="#4a5a66"/><path d="M318.800 122.800v-2.300m-1.500 1.200l1.500-1.800l1.500 1.800" stroke="#cce4f7" stroke-width="1.100" fill="none"/><path d="M346.45 118.99A5.8 5.8 0 1 0 339.12 122.49" stroke="#4a5a66" fill="none" stroke-width="2"/><path d="M343.2 118.2h7.600l-3.800 4.800z" fill="#4a5a66"/><circle cx="368.2" cy="115" r="5.600" stroke="#4a5a66" fill="none" stroke-width="1.300"/><path d="M372.2 119.2l5 5" stroke="#4a5a66" fill="none" stroke-width="2.300"/><path d="M392.0 125.5c-1.700-1.300-3.300-3.800-4.800-6.600c-0.700-1.400 0.800-2.300 1.800-1.100l1.600 2.200v-8.300c0-1.500 2-1.500 2 0v5h0.500v-6.800c0-1.500 2-1.500 2 0v6.800h0.500v-6c0-1.500 2-1.500 2 0v6h0.500v-4.200c0-1.400 1.900-1.400 1.900 0v8.200c0 2.300-0.600 4-1.600 4.800z" fill="#4a5a66"/><path d="M408.8 114.3v-4h4M419.2 110.3h4v4M423.2 120.7v4h-4M412.8 124.7h-4v-4" stroke="#4a5a66" fill="none" stroke-width="1.900" stroke-linejoin="miter"/><path d="M479.7 114.6l3.8 3.8l3.8 -3.8" stroke="#444" stroke-width="1.2" fill="none"/><polygon points="504.00,110.00 506.00,115.25 511.61,115.53 507.23,119.05 508.70,124.47 504.00,121.40 499.30,124.47 500.77,119.05 496.39,115.53 502.00,115.25" fill="#4a5a66"/><path d="M522 109.500h3.600v2.300l1 1.500v3h2.200v-3l1-1.500v-2.300h3.600l0.300 3l1.400 8.500v3.500h-5.200v-4h-1v-3.400h-2.400v3.400h-1v4h-5.200v-3.500l1.400-8.500z" fill="#4a5a66"/><rect x="542.600" y="110" width="15" height="14" fill="none" stroke="#4a5a66" stroke-width="1.300"/><path d="M542 110h16.200" stroke="#4a5a66" stroke-width="1.800"/><path d="M550 122l-3.100-4.200a3.800 3.800 0 1 1 6.200 0z" fill="#4a5a66"/><circle cx="550" cy="115.700" r="1.500" fill="#f0f0f0"/><rect x="574.500" y="111.500" width="7.500" height="7" fill="none" stroke="#4a5a66" stroke-width="1.300" stroke-dasharray="2.300 1.300"/><path d="M582 119.500l5.300 3.200l-2.200 0.500l1.300 2.500l-1.200 0.600l-1.300-2.600l-1.600 1.500z" fill="#4a5a66"/><ellipse cx="602" cy="115.500" rx="6.500" ry="5" fill="none" stroke="#4a5a66" stroke-width="1.200"/><circle cx="601" cy="120" r="1.400" fill="none" stroke="#4a5a66" stroke-width="1"/><path d="M601.800 121.200c1 1.500 2.500 2.200 5 2" stroke="#4a5a66" stroke-width="1" fill="none"/><path d="M625.8 109v16" stroke="#4a5a66" stroke-width="1.800"/><rect x="623.5999999999999" y="112.5" width="4.400" height="4" rx="1.500" fill="#4a5a66"/><path d="M631 109v16" stroke="#4a5a66" stroke-width="1.800"/><rect x="628.8" y="117.5" width="4.400" height="4" rx="1.500" fill="#4a5a66"/><path d="M636.2 109v16" stroke="#4a5a66" stroke-width="1.800"/><rect x="634.0" y="113.5" width="4.400" height="4" rx="1.500" fill="#4a5a66"/><path d="M650.5 112h6l4 4v9h-10z" fill="#4a5a66"/><path d="M656.2 111.8v4.400h4.400" stroke="#f0f0f0" stroke-width="0.900" fill="none"/><path d="M648.2 111.5v14M646.8 111.5h2.800M646.8 125.5h2.800" stroke="#4a5a66" stroke-width="1"/><path d="M650.5 109.8h10.200M650.5 108.5v2.600M660.7 108.5v2.600" stroke="#4a5a66" stroke-width="1"/><path d="M677 109l7 3.800l-7 3.800l-7-3.800z" fill="#4a5a66"/><path d="M670 117.3l7 3.800l7-3.800M670 121.3l7 3.800l7-3.800" stroke="#4a5a66" fill="none" stroke-width="1.700"/><rect x="695" y="110" width="12" height="15" fill="#4a5a66"/><rect x="696.500" y="118" width="2.800" height="7" fill="#cce4f7"/><rect x="716.500" y="112" width="15" height="11" fill="#36434d"/><text x="724" y="120.700" text-anchor="middle" font-family="Liberation Sans" font-weight="bold" font-size="7.500" fill="#f4f4f4">1,5</text><path d="M752.5 108.7c-5 0-8.700 3.700-8.700 8.200c0 4.400 3.700 7.800 8 7.800c3.800 0 6.800-1.600 8.400-4.600c0.500-1-0.300-1.700-1.300-1.500c-2 0.500-4.300 0.300-4.800-1.800c-0.400-1.800 1-3.200 2.300-4.400c1.300-1.300 0.800-2.400-0.500-3c-1-0.500-2.200-0.700-3.400-0.700z" fill="#4a5a66"/><circle cx="747.2" cy="115.4" r="1.250" fill="#f0f0f0"/><circle cx="750" cy="111.9" r="1.250" fill="#f0f0f0"/><circle cx="754.2" cy="111.7" r="1.250" fill="#f0f0f0"/><circle cx="748" cy="119.9" r="1.250" fill="#f0f0f0"/><circle cx="751.5" cy="122.0" r="1.250" fill="#f0f0f0"/><path d="M773 110.500a1.800 1.800 0 0 1 3.600 0v8.200a3.600 3.600 0 1 1 -3.600 0z" fill="none" stroke="#4a5a66" stroke-width="1.200"/><circle cx="774.800" cy="121.700" r="1.900" fill="#4a5a66"/><path d="M774.800 121v-7" stroke="#4a5a66" stroke-width="1.200"/><path d="M778.400 110.500h1.500M778.400 112.500h1.500M778.400 114.500h1.500" stroke="#4a5a66" stroke-width="0.700"/><path d="M848.7 114.6l3.8 3.8l3.8 -3.8" stroke="#9a9a9a" stroke-width="1.2" fill="none"/><path d="M918.7 114.6l3.8 3.8l3.8 -3.8" stroke="#9a9a9a" stroke-width="1.2" fill="none"/><path d="M949.500 117.500l-6-5.500M949.500 117.500l6.500-6.500M949.500 117.500l-6.500 5M949.500 117.500l7 2M949.500 117.500l0.500 7" stroke="#4a5a66" stroke-width="1.200"/><circle cx="949.500" cy="117.500" r="2.500" fill="#4a5a66"/><circle cx="950" cy="124.300" r="1.800" fill="#4a5a66"/><circle cx="956.300" cy="110.700" r="1.300" fill="#4a5a66"/><path d="M966.500 123l10.500-10.500" stroke="#4a5a66" stroke-width="1.300"/><path d="M965 119.500l5 5M973.500 111l5 5" stroke="#4a5a66" stroke-width="1.600"/><path d="M966 117.800l6.500-6.500" stroke="#4a5a66" stroke-width="1" stroke-dasharray="1.500 1.200"/><path d="M964.500 124.800l1-4.200l3.200 3.200zM979 110.500l-1 4.200l-3.200-3.200z" fill="#4a5a66"/><path d="M994.0 112.2h6v2.500l-1.500 1.500v3.500h3.500l1.500-1.500h3v6.500h-12.500z" fill="#4a5a66"/><path d="M994.0 112.2h6.300v5.800h6.200v6.700h-12.500z" fill="#4a5a66"/><path d="M1002.0 116.2l5-5" stroke="#4a5a66" stroke-width="2.400"/><path d="M1003.0 108.9h6.200v6.200z" fill="#4a5a66"/><rect x="1019.2" y="108.7" width="9.600" height="4" fill="#4a5a66"/><path d="M1016 113.9h16v8.300h-3v-3.500h-10v3.500h-3z" fill="#4a5a66"/><rect x="1029" y="115.4" width="1.400" height="1.200" fill="#f0f0f0"/><rect x="1019.7" y="119.9" width="8.600" height="5" fill="#f0f0f0" stroke="#4a5a66" stroke-width="1.300"/><path d="M1021.5 122.4h5" stroke="#4a5a66" stroke-width="1"/></svg>
<div class="hdr" style="left:1115px;top:78px;width:810px;height:26px;"></div>
<div class="a" style="left:1187px;top:80px;width:94px;height:25px;background:#f0f0f0;border:1px solid #bdbdbd;box-sizing:border-box;border-bottom:none;"></div>
<div class="t b" style="left:1200px;top:87px;font-size:12px;letter-spacing:-0.286px;">ModesXY</div>
<div class="hl" style="left:1333px;top:107px;width:21px;height:20px;"></div>
<div class="hl" style="left:1581px;top:107px;width:21px;height:20px;"></div>
<div class="combo" style="left:1261px;top:106px;width:65px;height:21px;"></div>
<div class="t" style="left:1266px;top:111px;font-size:12px;letter-spacing:-0.422px;">100%</div>
<div class="canvas" style="left:1115px;top:130px;width:804px;height:576px;"></div>
<svg style="left:1115px;top:130px;overflow:hidden" width="804" height="576" viewBox="1115 130 804 576"><rect x="1123.500" y="139.500" width="788" height="557" fill="#fff" stroke="#707070" stroke-width="1"/><path d="M1304.5 155.5V654.5M1451.5 155.5V654.5M1597.5 155.5V654.5M1743.5 155.5V654.5M1890.5 155.5V654.5M1158.5 554.5H1890.5M1158.5 454.5H1890.5M1158.5 354.5H1890.5M1158.5 255.5H1890.5M1158.5 155.5H1890.5" stroke="#c2c2c2" stroke-width="1" fill="none"/><path d="M1158.5 629.5h5M1158.5 604.5h5M1158.5 579.5h5M1158.5 529.5h5M1158.5 504.5h5M1158.5 479.5h5M1158.5 429.5h5M1158.5 404.5h5M1158.5 380.5h5M1158.5 330.5h5M1158.5 305.5h5M1158.5 280.5h5M1158.5 230.5h5M1158.5 205.5h5M1158.5 180.5h5M1195.5 654.5v-4.500M1231.5 654.5v-4.500M1268.5 654.5v-4.500M1341.5 654.5v-4.500M1377.5 654.5v-4.500M1414.5 654.5v-4.500M1487.5 654.5v-4.500M1524.5 654.5v-4.500M1560.5 654.5v-4.500M1633.5 654.5v-4.500M1670.5 654.5v-4.500M1706.5 654.5v-4.500M1780.5 654.5v-4.500M1816.5 654.5v-4.500M1853.5 654.5v-4.500" stroke="#b5b5b5" stroke-width="1" fill="none"/><path d="M1632.6 155.5L1743.5 654.5" stroke="#14148c" stroke-width="1.200" stroke-dasharray="1.600 3.400" fill="none"/><path d="M1670.0 155.5L1743.5 654.5" stroke="#14148c" stroke-width="1.200" stroke-dasharray="1.600 3.400" fill="none"/><path d="M1706.9 155.5L1743.5 654.5" stroke="#14148c" stroke-width="1.400" fill="none"/><text x="1612" y="164.500" font-family="Liberation Sans" font-size="8.800" fill="#14148c">15%</text><text x="1649" y="164.500" font-family="Liberation Sans" font-size="8.800" fill="#14148c">10%</text><text x="1690" y="164.500" font-family="Liberation Sans" font-size="8.800" fill="#14148c">5%</text><text x="1152" y="654.2" text-anchor="end" font-family="Liberation Sans" font-size="9.300" fill="#000">0</text><text x="1152" y="557.9" text-anchor="end" font-family="Liberation Sans" font-size="9.300" fill="#000">2</text><text x="1152" y="457.9" text-anchor="end" font-family="Liberation Sans" font-size="9.300" fill="#000">4</text><text x="1152" y="357.9" text-anchor="end" font-family="Liberation Sans" font-size="9.300" fill="#000">6</text><text x="1152" y="258.9" text-anchor="end" font-family="Liberation Sans" font-size="9.300" fill="#000">8</text><text x="1152" y="158.9" text-anchor="end" font-family="Liberation Sans" font-size="9.300" fill="#000">10</text><text x="1158.0" y="667" text-anchor="middle" font-family="Liberation Sans" font-size="9.300" fill="#000">-8</text><text x="1304.0" y="667" text-anchor="middle" font-family="Liberation Sans" font-size="9.300" fill="#000">-6</text><text x="1451.0" y="667" text-anchor="middle" font-family="Liberation Sans" font-size="9.300" fill="#000">-4</text><text x="1597.0" y="667" text-anchor="middle" font-family="Liberation Sans" font-size="9.300" fill="#000">-2</text><text x="1743.5" y="667" text-anchor="middle" font-family="Liberation Sans" font-size="9.300" fill="#000">0</text><text x="1890.5" y="667" text-anchor="middle" font-family="Liberation Sans" font-size="9.300" fill="#000">2</text><circle cx="1171.0" cy="683.0" r="1.6" fill="#1565c0"/><path d="M1324.5 681.0l5.0 5.0M1329.5 681.0l-5.0 5.0" stroke="#f01818" stroke-width="0.900" fill="none"/><circle cx="1532.0" cy="683.5" r="2" fill="#fff" stroke="#38b020" stroke-width="1"/><text x="1190" y="686.300" font-family="Liberation Sans" font-size="8.800" fill="#111" textLength="97" lengthAdjust="spacingAndGlyphs">Parte imaginaria [rad/s]</text><text x="1346" y="686.300" font-family="Liberation Sans" font-size="8.800" fill="#111" textLength="143" lengthAdjust="spacingAndGlyphs">Parte imaginaria [rad/s] (X = 1.0%)</text><text x="1551" y="686.300" font-family="Liberation Sans" font-size="8.800" fill="#111" textLength="148" lengthAdjust="spacingAndGlyphs">Parte imaginaria [rad/s] (X = 60.0%)</text><clipPath id="plotclip"><rect x="1158.5" y="150" width="738.0" height="505.1"/></clipPath><g clip-path="url(#plotclip)"><path d="M1381.2 652.2l4.6 4.6M1385.8 652.2l-4.6 4.6" stroke="#f01818" stroke-width="0.900" fill="none"/><path d="M1483.0 652.2l4.6 4.6M1487.6 652.2l-4.6 4.6" stroke="#f01818" stroke-width="0.900" fill="none"/><path d="M1548.7 652.2l4.6 4.6M1553.3 652.2l-4.6 4.6" stroke="#f01818" stroke-width="0.900" fill="none"/><path d="M1603.9 652.2l4.6 4.6M1608.5 652.2l-4.6 4.6" stroke="#f01818" stroke-width="0.900" fill="none"/><path d="M1625.1 652.2l4.6 4.6M1629.7 652.2l-4.6 4.6" stroke="#f01818" stroke-width="0.900" fill="none"/><path d="M1668.1 652.2l4.6 4.6M1672.7 652.2l-4.6 4.6" stroke="#f01818" stroke-width="0.900" fill="none"/><path d="M1705.1 652.2l4.6 4.6M1709.7 652.2l-4.6 4.6" stroke="#f01818" stroke-width="0.900" fill="none"/><path d="M1718.2 652.2l4.6 4.6M1722.8 652.2l-4.6 4.6" stroke="#f01818" stroke-width="0.900" fill="none"/><circle cx="1397.8" cy="654.2" r="1.5" fill="#1565c0"/><circle cx="1408.0" cy="654.2" r="1.5" fill="#1565c0"/><circle cx="1416.0" cy="654.2" r="1.5" fill="#1565c0"/><circle cx="1422.5" cy="654.2" r="1.5" fill="#1565c0"/><circle cx="1428.0" cy="654.2" r="1.5" fill="#1565c0"/><circle cx="1432.5" cy="654.2" r="1.5" fill="#1565c0"/><circle cx="1436.5" cy="654.2" r="1.5" fill="#1565c0"/><path d="M1439.0 654.0 L1465.0 654.0" stroke="#1565c0" stroke-width="2.6" fill="none" stroke-linecap="round" stroke-linejoin="round"/><circle cx="1490.0" cy="654.2" r="1.4" fill="#1565c0"/><circle cx="1494.5" cy="654.2" r="1.4" fill="#1565c0"/><circle cx="1499.0" cy="654.2" r="1.4" fill="#1565c0"/><circle cx="1503.0" cy="654.2" r="1.4" fill="#1565c0"/><circle cx="1507.0" cy="654.2" r="1.4" fill="#1565c0"/><circle cx="1511.0" cy="654.2" r="1.4" fill="#1565c0"/><circle cx="1515.0" cy="654.2" r="1.4" fill="#1565c0"/><circle cx="1519.0" cy="654.2" r="1.4" fill="#1565c0"/><circle cx="1523.0" cy="654.2" r="1.4" fill="#1565c0"/><path d="M1534.0 654.0 L1550.0 654.0" stroke="#1565c0" stroke-width="2.4" fill="none" stroke-linecap="round" stroke-linejoin="round"/><circle cx="1467.0" cy="654.0" r="2" fill="#fff" stroke="#38b020" stroke-width="1"/><circle cx="1610.3" cy="654.0" r="2" fill="#fff" stroke="#38b020" stroke-width="1"/><circle cx="1627.4" cy="654.0" r="2" fill="#fff" stroke="#38b020" stroke-width="1"/><circle cx="1670.4" cy="654.0" r="2" fill="#fff" stroke="#38b020" stroke-width="1"/><circle cx="1687.5" cy="654.0" r="2" fill="#fff" stroke="#38b020" stroke-width="1"/><circle cx="1707.4" cy="654.0" r="2" fill="#fff" stroke="#38b020" stroke-width="1"/><circle cx="1721.5" cy="654.0" r="2" fill="#fff" stroke="#38b020" stroke-width="1"/><circle cx="1744.0" cy="654.0" r="2" fill="#fff" stroke="#38b020" stroke-width="1"/><circle cx="1162.3" cy="422.2" r="1.7" fill="#1565c0"/><circle cx="1171.4" cy="422.8" r="1.7" fill="#1565c0"/><circle cx="1178.6" cy="423.0" r="1.7" fill="#1565c0"/><circle cx="1184.9" cy="423.2" r="1.7" fill="#1565c0"/><circle cx="1190.0" cy="423.2" r="1.7" fill="#1565c0"/><circle cx="1194.5" cy="423.2" r="1.7" fill="#1565c0"/><circle cx="1198.3" cy="423.2" r="1.7" fill="#1565c0"/><circle cx="1201.6" cy="423.1" r="1.7" fill="#1565c0"/><circle cx="1204.5" cy="423.0" r="1.7" fill="#1565c0"/><path d="M1206.0 423.0 L1220.0 422.2 L1238.0 420.3" stroke="#1565c0" stroke-width="3.2" fill="none" stroke-linecap="round" stroke-linejoin="round"/><circle cx="1240.3" cy="420.2" r="2.1" fill="#fff" stroke="#38b020" stroke-width="1"/><path d="M1587.1 328.2l4.6 4.6M1591.7 328.2l-4.6 4.6" stroke="#f01818" stroke-width="0.900" fill="none"/><circle cx="1610.0" cy="359.5" r="1.8" fill="#1565c0"/><circle cx="1621.8" cy="381.5" r="1.8" fill="#1565c0"/><circle cx="1628.8" cy="399.2" r="1.8" fill="#1565c0"/><circle cx="1632.6" cy="413.4" r="1.8" fill="#1565c0"/><circle cx="1634.1" cy="425.3" r="1.8" fill="#1565c0"/><circle cx="1634.1" cy="435.4" r="1.8" fill="#1565c0"/><circle cx="1632.6" cy="443.4" r="1.8" fill="#1565c0"/><circle cx="1630.6" cy="450.3" r="1.8" fill="#1565c0"/><circle cx="1628.3" cy="455.6" r="1.8" fill="#1565c0"/><circle cx="1626.1" cy="459.7" r="1.8" fill="#1565c0"/><circle cx="1624.1" cy="463.1" r="1.8" fill="#1565c0"/><path d="M1622.5 465.5 L1618.0 472.0 L1613.5 479.0 L1610.8 485.7" stroke="#1565c0" stroke-width="3.4" fill="none" stroke-linecap="round" stroke-linejoin="round"/><circle cx="1610.6" cy="488.6" r="2.1" fill="#fff" stroke="#38b020" stroke-width="1"/><path d="M1647.2 534.3l4.6 4.6M1651.8 534.3l-4.6 4.6" stroke="#f01818" stroke-width="0.900" fill="none"/><circle cx="1656.2" cy="532.2" r="1.8" fill="#1565c0"/><circle cx="1661.0" cy="528.1" r="1.8" fill="#1565c0"/><circle cx="1665.8" cy="525.1" r="1.8" fill="#1565c0"/><circle cx="1670.4" cy="522.4" r="1.8" fill="#1565c0"/><circle cx="1675.0" cy="520.7" r="1.8" fill="#1565c0"/><circle cx="1679.6" cy="519.3" r="1.8" fill="#1565c0"/><circle cx="1684.4" cy="518.7" r="1.8" fill="#1565c0"/><circle cx="1689.3" cy="518.7" r="1.8" fill="#1565c0"/><circle cx="1694.1" cy="519.3" r="1.8" fill="#1565c0"/><circle cx="1698.3" cy="520.5" r="1.8" fill="#1565c0"/><circle cx="1702.2" cy="521.9" r="1.8" fill="#1565c0"/><circle cx="1705.8" cy="523.7" r="1.8" fill="#1565c0"/><circle cx="1708.8" cy="525.6" r="1.8" fill="#1565c0"/><circle cx="1711.4" cy="527.8" r="1.8" fill="#1565c0"/><path d="M1713.0 529.5C1713.3 529.9 1714.1 530.3 1715.0 531.6C1715.9 532.9 1717.5 535.5 1718.5 537.5C1719.5 539.5 1720.4 541.5 1721.2 543.7C1722.0 545.9 1722.8 548.4 1723.3 550.7C1723.8 553.1 1724.1 555.1 1724.3 557.8C1724.5 560.5 1724.6 564.1 1724.5 566.7C1724.4 569.4 1724.1 571.1 1723.8 573.7C1723.5 576.4 1723.1 581.1 1722.9 582.6" stroke="#1565c0" stroke-width="3.600" fill="none" stroke-linecap="round"/><circle cx="1722.6" cy="586.1" r="2.1" fill="#fff" stroke="#38b020" stroke-width="1"/><path d="M1224.8 580.4 L1227.0 577.0 L1228.7 573.3" stroke="#1565c0" stroke-width="3.2" fill="none" stroke-linecap="round" stroke-linejoin="round"/><path d="M1221.1 580.2l4.6 4.6M1225.7 580.2l-4.6 4.6" stroke="#f01818" stroke-width="0.900" fill="none"/><circle cx="1229.3" cy="570.3" r="2.1" fill="#fff" stroke="#38b020" stroke-width="1"/><path d="M1646.0 608.3 L1652.0 609.2 L1660.1 610.0" stroke="#1565c0" stroke-width="3.2" fill="none" stroke-linecap="round" stroke-linejoin="round"/><circle cx="1662.5" cy="610.2" r="1.6" fill="#1565c0"/><circle cx="1665.1" cy="610.5" r="1.6" fill="#1565c0"/><circle cx="1669.3" cy="611.4" r="1.6" fill="#1565c0"/><circle cx="1674.5" cy="612.3" r="1.6" fill="#1565c0"/><circle cx="1646.5" cy="606.3" r="2.1" fill="#fff" stroke="#38b020" stroke-width="1"/><path d="M1678.2 612.5l4.6 4.6M1682.8 612.5l-4.6 4.6" stroke="#f01818" stroke-width="0.900" fill="none"/><path d="M1699.5 617.0 L1705.5 617.4" stroke="#1565c0" stroke-width="3" fill="none" stroke-linecap="round" stroke-linejoin="round"/><circle cx="1701.5" cy="613.5" r="2.1" fill="#fff" stroke="#38b020" stroke-width="1"/><path d="M1706.1 617.4l4.6 4.6M1710.7 617.4l-4.6 4.6" stroke="#f01818" stroke-width="0.900" fill="none"/><path d="M1529.7 651.4C1529.9 650.5 1530.4 647.6 1531.0 646.0C1531.6 644.4 1532.5 642.8 1533.5 641.5C1534.5 640.2 1536.2 639.0 1536.8 638.5" stroke="#1565c0" stroke-width="3.200" fill="none" stroke-linecap="round"/><circle cx="1537.3" cy="638.0" r="2.1" fill="#fff" stroke="#38b020" stroke-width="1"/><path d="M1731.2 635.2l4.6 4.6M1735.8 635.2l-4.6 4.6" stroke="#f01818" stroke-width="0.900" fill="none"/><circle cx="1735.0" cy="636.8" r="1.5" fill="#1565c0"/><path d="M1736.0 638.5l4 4M1740.0 638.5l-4 4" stroke="#f01818" stroke-width="0.900" fill="none"/><circle cx="1735.8" cy="637.0" r="2.1" fill="#fff" stroke="#38b020" stroke-width="1"/><circle cx="1739.2" cy="639.7" r="2.1" fill="#fff" stroke="#38b020" stroke-width="1"/></g><path d="M1158.5 155.5V654.5H1890.5" stroke="#000" stroke-width="1.250" fill="none"/><path d="M1141.3 465.2C1144.2 464.8 1151.3 463.6 1158.4 462.5C1165.5 461.4 1175.7 460.4 1183.9 458.9C1192.1 457.4 1199.6 455.3 1207.5 453.4C1215.4 451.4 1224.2 449.2 1231.1 447.2C1238.0 445.2 1244.1 442.7 1248.8 441.3C1253.5 439.9 1257.3 439.1 1259.0 438.7" stroke="#ff0000" stroke-width="1.7" fill="none" stroke-linecap="round" stroke-linejoin="round"/><path d="M1259.0 438.7C1257.0 438.4 1251.1 436.9 1246.8 436.9C1242.5 436.9 1234.1 438.3 1233.4 438.9C1232.8 439.5 1239.1 440.2 1242.9 440.3C1246.7 440.4 1253.8 439.5 1256.0 439.3" stroke="#ff0000" stroke-width="1.5" fill="none" stroke-linecap="round" stroke-linejoin="round"/><path d="M1259.0 438.7 L1229.1 464.0" stroke="#ff0000" stroke-width="1.7" fill="none" stroke-linecap="round" stroke-linejoin="round"/><path d="M1552.4 323.2C1552.4 324.2 1551.9 326.8 1552.4 329.5C1552.9 332.2 1552.9 335.6 1555.4 339.3C1557.9 343.1 1563.3 347.4 1567.2 352.0C1571.1 356.6 1574.3 362.0 1578.9 366.8C1583.5 371.6 1591.1 376.4 1594.7 380.6C1598.3 384.9 1599.5 388.4 1600.6 392.3C1601.7 396.2 1601.8 399.8 1601.1 404.1C1600.4 408.4 1599.6 412.3 1596.6 417.9C1593.6 423.5 1587.8 431.3 1582.9 437.5C1578.0 443.7 1572.2 449.8 1567.2 455.2C1562.2 460.6 1555.4 467.5 1553.0 470.0" stroke="#ff0000" stroke-width="1.7" fill="none" stroke-linecap="round" stroke-linejoin="round"/><path d="M1553.0 470.0 L1556.7 443.4" stroke="#ff0000" stroke-width="1.7" fill="none" stroke-linecap="round" stroke-linejoin="round"/><path d="M1556.7 443.4C1555.6 446.2 1552.1 454.9 1550.0 460.0C1547.9 465.1 1543.9 471.5 1544.2 473.9C1544.5 476.3 1548.4 475.0 1552.0 474.5C1555.6 474.0 1560.8 472.6 1566.0 471.0C1571.2 469.4 1580.1 466.0 1582.9 465.0" stroke="#ff0000" stroke-width="1.7" fill="none" stroke-linecap="round" stroke-linejoin="round"/><path d="M1651.3 500.3C1656.0 499.6 1670.5 497.1 1679.6 495.9C1688.7 494.7 1697.2 492.9 1706.1 492.9C1714.9 492.9 1724.5 493.9 1732.7 495.9C1741.0 497.9 1749.4 500.7 1755.6 504.8C1761.8 508.9 1766.7 514.8 1769.8 520.7C1772.9 526.6 1773.5 534.2 1774.2 540.1C1774.9 546.0 1774.8 550.8 1774.2 556.1C1773.6 561.4 1771.7 568.0 1770.7 572.0C1769.7 576.0 1768.5 578.6 1768.0 579.9" stroke="#ff0000" stroke-width="1.7" fill="none" stroke-linecap="round" stroke-linejoin="round"/><path d="M1768.0 579.9C1767.2 578.4 1764.7 574.8 1763.0 571.0C1761.3 567.2 1758.8 559.6 1757.9 557.3" stroke="#ff0000" stroke-width="1.7" fill="none" stroke-linecap="round" stroke-linejoin="round"/><path d="M1757.9 557.3C1757.8 559.1 1757.0 564.4 1757.0 568.0C1757.0 571.6 1757.0 575.5 1757.8 579.0C1758.6 582.5 1761.1 587.2 1761.8 588.8" stroke="#ff0000" stroke-width="1.7" fill="none" stroke-linecap="round" stroke-linejoin="round"/><path d="M1761.8 588.8 L1765.0 588.0 L1791.9 566.7" stroke="#ff0000" stroke-width="1.7" fill="none" stroke-linecap="round" stroke-linejoin="round"/><path d="M1691.6 639.2C1686.6 638.2 1671.3 635.4 1661.9 633.5C1652.5 631.6 1642.8 629.2 1635.4 627.7C1628.0 626.2 1620.7 625.2 1617.7 624.7" stroke="#ff0000" stroke-width="1.7" fill="none" stroke-linecap="round" stroke-linejoin="round"/><path d="M1617.7 624.7C1618.3 624.2 1618.0 622.1 1621.2 621.8C1624.4 621.5 1636.0 622.5 1637.1 622.9C1638.2 623.3 1630.8 624.0 1628.0 624.3C1625.2 624.6 1621.3 624.6 1620.0 624.7" stroke="#ff0000" stroke-width="1.5" fill="none" stroke-linecap="round" stroke-linejoin="round"/><path d="M1617.7 624.7 L1629.5 633.3" stroke="#ff0000" stroke-width="1.7" fill="none" stroke-linecap="round" stroke-linejoin="round"/></svg>
<svg style="left:0px;top:0px;" width="1919" height="130" viewBox="0 0 1919 130"><path d="M1121 89.0l6 6l6 -6" stroke="#333" stroke-width="1.6" fill="none"/><path d="M1157 92h-11.500M1150 87.3l-4.700 4.700l4.700 4.700" stroke="#a0a0a0" stroke-width="1.500" fill="none"/><path d="M1169 92h11.500M1176 87.3l4.700 4.700l-4.700 4.700" stroke="#a0a0a0" stroke-width="1.500" fill="none"/><path d="M1263.6 89.6l6.8 6.8M1270.4 89.6l-6.8 6.8" stroke="#4a5a66" stroke-width="1.6" fill="none"/><path d="M1287.5 92h11.0M1293 86.5v11.0" stroke="#303030" stroke-width="1.7" fill="none"/><rect x="1188" y="109" width="1" height="16" fill="#d2d2d2"/><rect x="1328" y="109" width="1" height="16" fill="#d2d2d2"/><rect x="1380" y="109" width="1" height="16" fill="#d2d2d2"/><rect x="1547" y="109" width="1" height="16" fill="#d2d2d2"/><rect x="1576" y="109" width="1" height="16" fill="#d2d2d2"/><rect x="1606" y="109" width="1" height="16" fill="#d2d2d2"/><rect x="1634" y="109" width="1" height="16" fill="#d2d2d2"/><rect x="1686" y="109" width="1" height="16" fill="#d2d2d2"/><rect x="1784" y="109" width="1" height="16" fill="#d2d2d2"/><path d="M1121.500 109.500v15.500M1120 123.500h14" stroke="#4a5a66" stroke-width="1.100" fill="none"/><rect x="1123.500" y="110" width="11.500" height="12" fill="#4a5a66"/><path d="M1124 122v-3.500c1.500-3.500 3-5 4.500-4s2 2.500 3 3.500v4z" fill="#f0f0f0"/><path d="M1128 121h8M1132 117v8" stroke="#2f5cf0" stroke-width="2"/><path d="M1144.500 109.500v15.500M1143 123.500h15" stroke="#4a5a66" stroke-width="1.100" fill="none"/><path d="M1146 122l5-6.500l3 2.500l3.500-4" stroke="#4a5a66" stroke-width="1" fill="none"/><path d="M1149.500 120.500l1-3l6-5.500l2 2l-6 5.500z" fill="#4a5a66"/><path d="M1179.45 118.99A5.8 5.8 0 1 0 1172.12 122.49" stroke="#4a5a66" fill="none" stroke-width="2"/><path d="M1176.2 118.2h7.600l-3.800 4.800z" fill="#4a5a66"/><circle cx="1201.7" cy="115" r="5.600" stroke="#4a5a66" fill="none" stroke-width="1.300"/><path d="M1205.7 119.2l5 5" stroke="#4a5a66" fill="none" stroke-width="2.300"/><path d="M1225.5 125.5c-1.700-1.300-3.300-3.800-4.800-6.600c-0.700-1.400 0.800-2.300 1.800-1.100l1.600 2.200v-8.300c0-1.500 2-1.500 2 0v5h0.500v-6.800c0-1.500 2-1.500 2 0v6.800h0.500v-6c0-1.500 2-1.500 2 0v6h0.500v-4.200c0-1.400 1.900-1.400 1.900 0v8.200c0 2.300-0.600 4-1.600 4.800z" fill="#4a5a66"/><path d="M1241.8 114.3v-4h4M1252.2 110.3h4v4M1256.2 120.7v4h-4M1245.8 124.7h-4v-4" stroke="#4a5a66" fill="none" stroke-width="1.900" stroke-linejoin="miter"/><path d="M1313.2 114.6l3.8 3.8l3.8 -3.8" stroke="#444" stroke-width="1.2" fill="none"/><rect x="1336" y="109" width="16" height="7" fill="#4a5a66"/><rect x="1336" y="118" width="16" height="7" fill="#4a5a66"/><path d="M1337 113c2-3 4-3 6 0s4 3 8 -0.500" stroke="#cce4f7" stroke-width="1" fill="none"/><path d="M1337 122c1.500-3 2.500-3 4 0s2.500 3 4 0s2.500-3 4 0" stroke="#cce4f7" stroke-width="1" fill="none"/><rect x="1358" y="109" width="7.500" height="16" fill="#4a5a66"/><rect x="1367" y="109" width="7.500" height="16" fill="#4a5a66"/><path d="M1359 119c1-8 2-8 3 0s2 6 3-2" stroke="#f0f0f0" stroke-width="1" fill="none"/><path d="M1368 114c1 8 2 8 3 0s2-6 3 4" stroke="#f0f0f0" stroke-width="1" fill="none"/><path d="M1388 116.500v7.500M1402.500 116.500v7.500M1388 120.500h14.500" stroke="#4a5a66" stroke-width="2" fill="none"/><path d="M1392 113.500h7" stroke="#4a5a66" stroke-width="1.300"/><path d="M1389.500 113.500l3-2.500v5zM1401 113.500l-3-2.500v5z" fill="#4a5a66"/><path d="M1413 109.500h6M1413 124.500h6M1416 109.500v15" stroke="#4a5a66" stroke-width="2" fill="none"/><path d="M1421.500 113v8" stroke="#4a5a66" stroke-width="1.200"/><path d="M1421.500 110.500l-2.300 3h4.600zM1421.500 124l-2.300-3h4.600z" fill="#4a5a66"/><path d="M1437 111v6M1445 111v6" stroke="#4a5a66" stroke-width="1.500"/><path d="M1435 120.5h12" stroke="#4a5a66" stroke-width="2"/><path d="M1433 120.5l4-4v8zM1449 120.5l-4-4v8z" fill="#4a5a66"/><path d="M1461 111v12" stroke="#4a5a66" stroke-width="2"/><path d="M1461 109l-4 4h8zM1461 125l-4-4h8z" fill="#4a5a66"/><path d="M1464 113.500h6M1464 120.500h6" stroke="#4a5a66" stroke-width="1.300"/><path d="M1481 117.5h12" stroke="#4a5a66" stroke-width="2"/><path d="M1479 117.5l4-4v8zM1495 117.5l-4-4v8z" fill="#4a5a66"/><path d="M1510 112.0v11.0" stroke="#4a5a66" stroke-width="2"/><path d="M1510 110.0l-4 4h8zM1510 125.0l-4-4h8z" fill="#4a5a66"/><path d="M1527 117.500h3l2-3.500l3 7l2.500-6l1.500 2.500h2" stroke="#4a5a66" stroke-width="1.300" fill="none"/><path d="M1524.500 117.500l3-2.500v5zM1541.500 117.500l-3-2.500v5z" fill="#4a5a66"/><path d="M1555 111.500h14v8.500h-2.500v2.500l-3-2.500h-8.500z" fill="#4a5a66"/><path d="M1585 119.500h3l2 2.500l3.500-5l1.500 2.500h4" stroke="#4a5a66" stroke-width="1.400" fill="none"/><path d="M1592.500 111.500l1 2.500l2.500 1l-2.500 1l-1 2.500l-1-2.500l-2.500-1l2.500-1z" fill="#5a7cf5"/><rect x="1613" y="110" width="14" height="14" fill="#4a5a66"/><path d="M1616 124v-14M1616.500 110.500l8 13M1624.500 110v14" stroke="#f0f0f0" stroke-width="0.900" fill="none"/><path d="M1613.500 117l1.500-1M1627 117l-1.500 1" stroke="#f0f0f0" stroke-width="0.800"/><rect x="1642" y="110" width="14" height="14" fill="#4a5a66"/><rect x="1644.500" y="111.500" width="2.600" height="11" fill="#f0f0f0"/><rect x="1665" y="110" width="14" height="14" fill="#4a5a66"/><rect x="1674" y="111.500" width="2.600" height="11" fill="#f0f0f0"/><rect x="1695" y="109.500" width="12" height="15.500" fill="#4a5a66"/><rect x="1696.300" y="121" width="9.400" height="2.800" fill="#f0f0f0"/><path d="M1718.8 109v16" stroke="#4a5a66" stroke-width="1.800"/><rect x="1716.6" y="112.5" width="4.400" height="4" rx="1.500" fill="#4a5a66"/><path d="M1724 109v16" stroke="#4a5a66" stroke-width="1.800"/><rect x="1721.8" y="117.5" width="4.400" height="4" rx="1.500" fill="#4a5a66"/><path d="M1729.2 109v16" stroke="#4a5a66" stroke-width="1.800"/><rect x="1727.0" y="113.5" width="4.400" height="4" rx="1.500" fill="#4a5a66"/><path d="M1743.5 112h6l4 4v9h-10z" fill="#4a5a66"/><path d="M1749.2 111.8v4.400h4.400" stroke="#f0f0f0" stroke-width="0.900" fill="none"/><path d="M1741.2 111.5v14M1739.8 111.5h2.800M1739.8 125.5h2.800" stroke="#4a5a66" stroke-width="1"/><path d="M1743.5 109.8h10.200M1743.5 108.5v2.600M1753.7 108.5v2.600" stroke="#4a5a66" stroke-width="1"/><path d="M1770.5 108.7c-5 0-8.700 3.700-8.700 8.200c0 4.400 3.700 7.800 8 7.800c3.800 0 6.800-1.600 8.400-4.600c0.500-1-0.300-1.700-1.300-1.500c-2 0.500-4.300 0.300-4.800-1.800c-0.400-1.800 1-3.200 2.300-4.400c1.300-1.300 0.800-2.400-0.500-3c-1-0.500-2.200-0.700-3.400-0.700z" fill="#4a5a66"/><circle cx="1765.2" cy="115.4" r="1.250" fill="#f0f0f0"/><circle cx="1768" cy="111.9" r="1.250" fill="#f0f0f0"/><circle cx="1772.2" cy="111.7" r="1.250" fill="#f0f0f0"/><circle cx="1766" cy="119.9" r="1.250" fill="#f0f0f0"/><circle cx="1769.5" cy="122.0" r="1.250" fill="#f0f0f0"/><path d="M1792.0 112.2h6v2.500l-1.500 1.500v3.500h3.500l1.500-1.500h3v6.500h-12.500z" fill="#4a5a66"/><path d="M1792.0 112.2h6.300v5.800h6.200v6.700h-12.500z" fill="#4a5a66"/><path d="M1800.0 116.2l5-5" stroke="#4a5a66" stroke-width="2.400"/><path d="M1801.0 108.9h6.200v6.200z" fill="#4a5a66"/><rect x="1817.2" y="108.7" width="9.600" height="4" fill="#4a5a66"/><path d="M1814 113.9h16v8.300h-3v-3.500h-10v3.500h-3z" fill="#4a5a66"/><rect x="1827" y="115.4" width="1.400" height="1.200" fill="#f0f0f0"/><rect x="1817.7" y="119.9" width="8.600" height="5" fill="#f0f0f0" stroke="#4a5a66" stroke-width="1.300"/><path d="M1819.5 122.4h5" stroke="#4a5a66" stroke-width="1"/></svg>
<div class="hdr" style="left:305px;top:710px;width:1614px;height:26px;"></div>
<div class="t" style="left:331px;top:718px;font-size:12px;letter-spacing:0.230px;">Output Window</div>
<div class="a" style="left:308px;top:739px;width:84px;height:22px;background:#e2e2e2;border:1px solid #8ec6f5;box-sizing:border-box;"></div>
<div class="a" style="left:400px;top:739px;width:104px;height:22px;background:#e2e2e2;border:1px solid #8ec6f5;box-sizing:border-box;"></div>
<div class="a" style="left:512px;top:739px;width:88px;height:22px;background:#e2e2e2;border:1px solid #8ec6f5;box-sizing:border-box;"></div>
<div class="a" style="left:608px;top:739px;width:123px;height:22px;background:#e2e2e2;border:1px solid #adadad;box-sizing:border-box;"></div>
<div class="a" style="left:739px;top:739px;width:101px;height:22px;background:#e2e2e2;border:1px solid #8ec6f5;box-sizing:border-box;"></div>
<div class="a" style="left:847px;top:739px;width:200px;height:22px;background:#fff;border:1px solid #7a7a7a;box-sizing:border-box;"></div>
<div class="a" style="left:1054px;top:739px;width:100px;height:22px;background:#e2e2e2;border:1px solid #adadad;box-sizing:border-box;"></div>
<div class="t" style="left:334px;top:745px;font-size:12px;letter-spacing:-0.417px;">Errors (0)</div>
<div class="t" style="left:426px;top:745px;font-size:12px;letter-spacing:-0.146px;">Warnings (0)</div>
<div class="t" style="left:538px;top:745px;font-size:12px;letter-spacing:-0.417px;">Events (0)</div>
<div class="t" style="left:629px;top:745px;font-size:12px;letter-spacing:0.128px;">Information (0/26)</div>
<div class="t" style="left:765px;top:745px;font-size:12px;letter-spacing:-0.320px;">Others (203)</div>
<div class="t" style="left:851px;top:745px;font-size:12px;color:#8a8a8a;letter-spacing:-0.158px;">Filter as you type</div>
<div class="t" style="left:1075px;top:745px;font-size:12px;letter-spacing:-0.119px;">Clear all filters</div>
<div class="hl" style="left:1804px;top:739px;width:21px;height:21px;"></div>
<div class="a" style="left:305px;top:764px;width:1614px;height:251px;background:#fff;border-top:1px solid #c0c0c0;border-left:1px solid #c0c0c0;border-bottom:1px solid #c0c0c0;box-sizing:border-box;"></div>
<div class="t mono" style="left:310px;top:773px;font-size:15px;color:#111;letter-spacing:0.000px;white-space:pre;-webkit-text-stroke:0.3px #111;">Processing X = 49.0 %</div>
<div class="t mono" style="left:310px;top:792px;font-size:15px;color:#111;letter-spacing:0.000px;white-space:pre;-webkit-text-stroke:0.3px #111;">Processing X = 50.0 %</div>
<div class="t mono" style="left:310px;top:811px;font-size:15px;color:#111;letter-spacing:0.000px;white-space:pre;-webkit-text-stroke:0.3px #111;">Processing X = 51.0 %</div>
<div class="t mono" style="left:310px;top:830px;font-size:15px;color:#111;letter-spacing:0.000px;white-space:pre;-webkit-text-stroke:0.3px #111;">Processing X = 52.0 %</div>
<div class="t mono" style="left:310px;top:849px;font-size:15px;color:#111;letter-spacing:0.000px;white-space:pre;-webkit-text-stroke:0.3px #111;">Processing X = 53.0 %</div>
<div class="t mono" style="left:310px;top:868px;font-size:15px;color:#111;letter-spacing:0.000px;white-space:pre;-webkit-text-stroke:0.3px #111;">Processing X = 54.0 %</div>
<div class="t mono" style="left:310px;top:887px;font-size:15px;color:#111;letter-spacing:0.000px;white-space:pre;-webkit-text-stroke:0.3px #111;">Processing X = 55.0 %</div>
<div class="t mono" style="left:310px;top:906px;font-size:15px;color:#111;letter-spacing:0.000px;white-space:pre;-webkit-text-stroke:0.3px #111;">Processing X = 56.0 %</div>
<div class="t mono" style="left:310px;top:925px;font-size:15px;color:#111;letter-spacing:0.000px;white-space:pre;-webkit-text-stroke:0.3px #111;">Processing X = 57.0 %</div>
<div class="t mono" style="left:310px;top:944px;font-size:15px;color:#111;letter-spacing:0.000px;white-space:pre;-webkit-text-stroke:0.3px #111;">Processing X = 58.0 %</div>
<div class="t mono" style="left:310px;top:963px;font-size:15px;color:#111;letter-spacing:0.000px;white-space:pre;-webkit-text-stroke:0.3px #111;">Processing X = 59.0 %</div>
<div class="t mono" style="left:310px;top:982px;font-size:15px;color:#111;letter-spacing:0.000px;white-space:pre;-webkit-text-stroke:0.3px #111;">Processing X = 60.0 %</div>
<div class="a" style="left:1902px;top:765px;width:17px;height:248px;background:#fff;"></div>
<div class="a" style="left:1902px;top:968px;width:17px;height:19px;background:#e1e1e1;"></div>
<div class="a" style="left:0px;top:1015px;width:1919px;height:3px;background:#f0f0f0;"></div>
<svg style="left:0px;top:705px;" width="1919" height="313" viewBox="0 705 1919 313"><g transform="translate(312,717)"><path d="M7.200 0.300c1.600-0.700 4.600 2.300 4.200 4.100c-0.500 0.700-1.600 0.500-2.200 0.900l-1.700 2c0.600 1.100 0.500 2.200-0.300 3.100l-5.400-5.400c0.900-0.800 2-0.900 3.100-0.300l2-1.700c0.200-0.900-0.300-2 0.300-2.700z" fill="#4a5a66"/><path d="M3.800 8.300l-3.600 3.900" stroke="#4a5a66" stroke-width="1.200"/></g><rect x="1857.500" y="716.500" width="15" height="12.500" fill="#f4f4f4" stroke="#4a5a66" stroke-width="1"/><path d="M1857.500 725.500h15" stroke="#4a5a66" stroke-width="1"/><path d="M1865 718.500v4.500M1863 721l2 2l2-2M1869 727.300h2" stroke="#4a5a66" stroke-width="0.900" fill="none"/><rect x="1879.500" y="718.500" width="10" height="10" fill="#f4f4f4" stroke="#4a5a66" stroke-width="1.200"/><rect x="1882" y="721.500" width="5" height="4.500" fill="none" stroke="#4a5a66" stroke-width="1.100"/><path d="M1879.500 719.500h10" stroke="#4a5a66" stroke-width="1.400"/><path d="M1901.500 720l7 7.500M1908.500 720l-7 7.500" stroke="#4a5a66" stroke-width="1.700" fill="none"/><rect x="395" y="741" width="1" height="18" fill="#d4d4d4"/><rect x="507" y="741" width="1" height="18" fill="#d4d4d4"/><rect x="603" y="741" width="1" height="18" fill="#d4d4d4"/><rect x="735" y="741" width="1" height="18" fill="#d4d4d4"/><rect x="843" y="741" width="1" height="18" fill="#d4d4d4"/><rect x="1050" y="741" width="1" height="18" fill="#d4d4d4"/><circle cx="323.700" cy="750.500" r="7.800" fill="#e8212e"/><path d="M320.500 747.300l6.400 6.400M326.900 747.300l-6.400 6.400" stroke="#fff" stroke-width="2.200" fill="none"/><path d="M415.800 742.300l7.800 15.300h-15.600z" fill="#ffb400"/><path d="M415.800 747.800v5.200" stroke="#fff" stroke-width="1.800"/><rect x="414.900" y="754.300" width="1.800" height="1.800" fill="#fff"/><circle cx="527.600" cy="750.500" r="7.800" fill="#2f5ce8"/><path d="M522.500 753.800h1.200c1-6 2-8.500 3-7.500c1.200 1.500 1.500 7 6.500 7.500" stroke="#fff" stroke-width="1.200" fill="none"/><circle cx="618.600" cy="750.500" r="7.800" fill="#4a5a66"/><rect x="617.600" y="749.300" width="2" height="5.600" fill="#fff"/><rect x="617.600" y="746" width="2" height="2" fill="#fff"/><circle cx="754.600" cy="750.500" r="7.800" fill="#4a5a66"/><path d="M751.800 745.800h3.600l2.200 2.200v6h-5.800z" fill="#fff"/><path d="M755.200 745.800v2.400h2.400" stroke="#4a5a66" stroke-width="0.700" fill="none"/><path d="M1056.300 742.300h13.600l-5.100 6.700v8.600l-3.400-2.200v-6.400z" fill="#4a5a66"/><circle cx="1068.600" cy="754.800" r="3.400" fill="#fff" stroke="#e8202a" stroke-width="1.200"/><path d="M1066.200 757.200l4.800-4.800" stroke="#e8202a" stroke-width="1.200"/><path d="M1808 744h7.500M1808 748h7.500M1808 752h7.500M1808 756h10" stroke="#4a5a66" stroke-width="1.300"/><path d="M1819.500 743v10.500" stroke="#4a5a66" stroke-width="1.500"/><path d="M1816.800 752.500h5.400l-2.700 3.600z" fill="#4a5a66"/><line x1="1841.50" y1="750.00" x2="1845.00" y2="750.00" stroke="#4a5a66" stroke-width="3.200"/><line x1="1840.18" y1="753.18" x2="1842.66" y2="755.66" stroke="#4a5a66" stroke-width="3.200"/><line x1="1837.00" y1="754.50" x2="1837.00" y2="758.00" stroke="#4a5a66" stroke-width="3.200"/><line x1="1833.82" y1="753.18" x2="1831.34" y2="755.66" stroke="#4a5a66" stroke-width="3.200"/><line x1="1832.50" y1="750.00" x2="1829.00" y2="750.00" stroke="#4a5a66" stroke-width="3.200"/><line x1="1833.82" y1="746.82" x2="1831.34" y2="744.34" stroke="#4a5a66" stroke-width="3.200"/><line x1="1837.00" y1="745.50" x2="1837.00" y2="742.00" stroke="#4a5a66" stroke-width="3.200"/><line x1="1840.18" y1="746.82" x2="1842.66" y2="744.34" stroke="#4a5a66" stroke-width="3.200"/><circle cx="1837" cy="750" r="4.700" fill="none" stroke="#4a5a66" stroke-width="3"/><path d="M1852.500 742h12l3.500 3.500v12.500h-15.500z" fill="#4a5a66"/><rect x="1856" y="742" width="7" height="4.800" fill="#f0f0f0"/><rect x="1860" y="742.800" width="1.800" height="3.200" fill="#4a5a66"/><path d="M1855.500 752.500h9.500M1855.500 755h9.500" stroke="#f0f0f0" stroke-width="1"/><rect x="1877.8" y="742" width="9.600" height="4" fill="#4a5a66"/><path d="M1874.6 747.2h16v8.300h-3v-3.500h-10v3.500h-3z" fill="#4a5a66"/><rect x="1887.6" y="748.7" width="1.400" height="1.200" fill="#f0f0f0"/><rect x="1878.3" y="753.2" width="8.600" height="5" fill="#f0f0f0" stroke="#4a5a66" stroke-width="1.300"/><path d="M1880.1 755.7h5" stroke="#4a5a66" stroke-width="1"/><circle cx="1905.600" cy="750" r="7" fill="none" stroke="#4a5a66" stroke-width="1.800"/><path d="M1900.800 755l9.600-10" stroke="#4a5a66" stroke-width="1.800"/><path d="M1906.5 774.0l4 -4l4 4" stroke="#333" stroke-width="1.3" fill="none"/><path d="M1906.5 1003.0l4 4l4 -4" stroke="#333" stroke-width="1.3" fill="none"/><rect x="500" y="1015" width="1" height="3" fill="#cfcfcf"/><rect x="870" y="1015" width="1" height="3" fill="#cfcfcf"/><rect x="1377" y="1015" width="1" height="3" fill="#cfcfcf"/><rect x="1453" y="1015" width="1" height="3" fill="#cfcfcf"/><rect x="1609" y="1015" width="1" height="3" fill="#cfcfcf"/><rect x="1854" y="1015" width="1" height="3" fill="#cfcfcf"/></svg>
</div>
</body></html>
